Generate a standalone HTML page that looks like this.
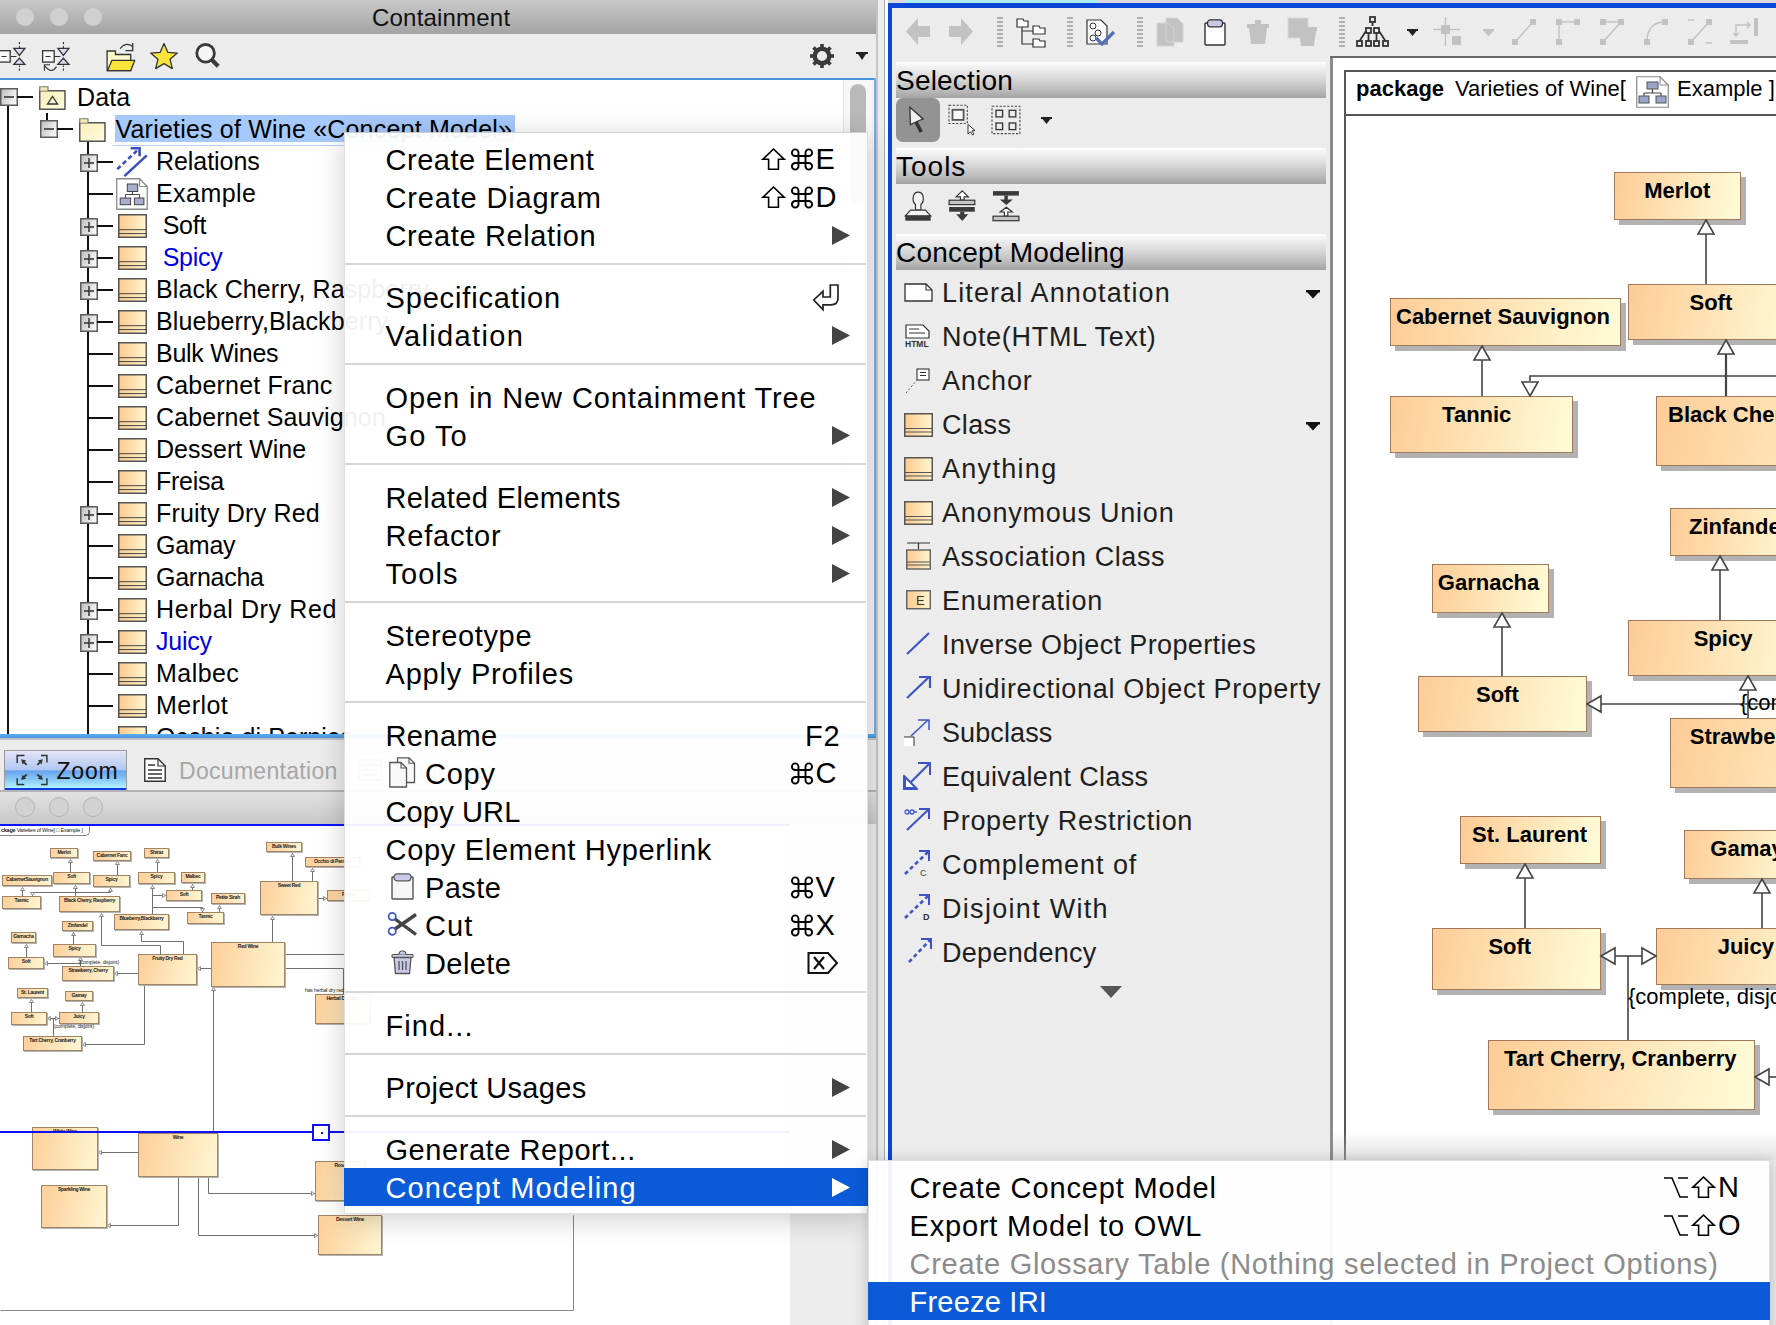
<!DOCTYPE html><html><head><meta charset="utf-8"><style>
html,body{margin:0;padding:0;}
body{width:1776px;height:1325px;overflow:hidden;position:relative;background:#ececec;font-family:"Liberation Sans", sans-serif;}
div{box-sizing:border-box;}
.t{position:absolute;white-space:pre;line-height:1;}
svg{position:absolute;overflow:visible;}
</style></head><body>
<div style="position:absolute;left:0px;top:0px;width:876px;height:34px;background:linear-gradient(#c9c9c9,#a3a3a3);"></div>
<div style="position:absolute;left:16px;top:8px;width:18px;height:18px;border-radius:50%;background:#d0d0d0;"></div>
<div style="position:absolute;left:50px;top:8px;width:18px;height:18px;border-radius:50%;background:#d0d0d0;"></div>
<div style="position:absolute;left:84px;top:8px;width:18px;height:18px;border-radius:50%;background:#d0d0d0;"></div>
<div class="t" style="left:372px;top:6px;font-size:24px;letter-spacing:0.2px;color:#111;">Containment</div>
<div style="position:absolute;left:0px;top:34px;width:876px;height:44px;background:#ececec;"></div>
<div style="position:absolute;left:0px;top:78px;width:876px;height:2px;background:#4a94dc;"></div>
<div style="position:absolute;left:0px;top:80px;width:874px;height:654px;background:#fff;"></div>
<div style="position:absolute;left:874px;top:78px;width:2px;height:660px;background:#6aaaf0;"></div>
<div style="position:absolute;left:876px;top:34px;width:2px;height:44px;background:#d4d4d4;"></div>
<div style="position:absolute;left:843px;top:80px;width:30px;height:654px;background:#f7f7f7;border-left:1px solid #e2e2e2;border-right:1px solid #ececec;"></div>
<div style="position:absolute;left:850px;top:84px;width:16px;height:120px;background:#b9b9b9;border-radius:8px;"></div>
<div style="position:absolute;left:0px;top:734px;width:876px;height:4px;background:linear-gradient(#5ab0f2,#4a92de);"></div>
<div style="position:absolute;left:0px;top:738px;width:876px;height:2px;background:#c4c4c4;"></div>
<div style="position:absolute;left:0px;top:740px;width:878px;height:50px;background:#ececec;"></div>
<div style="position:absolute;left:0px;top:790px;width:878px;height:2px;background:#b4b4b4;"></div>
<div style="position:absolute;left:0px;top:792px;width:878px;height:32px;background:linear-gradient(#e2e2e2,#c8c8c8);"></div>
<div style="position:absolute;left:15px;top:797px;width:20px;height:20px;border-radius:50%;background:#d2d2d2;border:1px solid #b4b4b4;"></div>
<div style="position:absolute;left:49px;top:797px;width:20px;height:20px;border-radius:50%;background:#d2d2d2;border:1px solid #b4b4b4;"></div>
<div style="position:absolute;left:83px;top:797px;width:20px;height:20px;border-radius:50%;background:#d2d2d2;border:1px solid #b4b4b4;"></div>
<div style="position:absolute;left:0px;top:824px;width:790px;height:2px;background:#0a14ff;"></div>
<div style="position:absolute;left:0px;top:826px;width:790px;height:499px;background:#fff;"></div>
<div style="position:absolute;left:876px;top:0px;width:2px;height:1325px;background:#c4c4c4;"></div>
<div style="position:absolute;left:878px;top:0px;width:6px;height:1325px;background:#ededed;"></div>
<div style="position:absolute;left:884px;top:0px;width:1px;height:1325px;background:#a8a8a8;"></div>
<div style="position:absolute;left:885px;top:0px;width:3px;height:1325px;background:#fff;"></div>
<div style="position:absolute;left:888px;top:0px;width:888px;height:4px;background:#dcdcdc;"></div>
<div style="position:absolute;left:905px;top:0px;width:193px;height:4px;background:#aef0fa;"></div>
<div style="position:absolute;left:888px;top:3px;width:888px;height:5px;background:#0a46d8;"></div>
<div style="position:absolute;left:888px;top:3px;width:4px;height:1322px;background:#0a46d8;"></div>
<div style="position:absolute;left:892px;top:8px;width:884px;height:48px;background:#ececec;"></div>
<div style="position:absolute;left:1330px;top:56px;width:446px;height:2px;background:#6a6a6a;"></div>
<div style="position:absolute;left:892px;top:58px;width:438px;height:1267px;background:#ececec;"></div>
<div style="position:absolute;left:1330px;top:58px;width:3px;height:1267px;background:#8c8c8c;"></div>
<div style="position:absolute;left:1333px;top:58px;width:443px;height:1102px;background:#fff;"></div>
<svg width="0" height="0" style="position:absolute"><defs><linearGradient id="expg" x1="0" y1="0.3" x2="1" y2="0.7"><stop offset="0" stop-color="#c2c2c2"/><stop offset="1" stop-color="#fbfbfb"/></linearGradient><linearGradient id="clsg" x1="0" y1="0" x2="1" y2="0"><stop offset="0" stop-color="#fcc98e"/><stop offset="1" stop-color="#fff6d0"/></linearGradient><linearGradient id="fldg" x1="0" y1="0" x2="1" y2="1"><stop offset="0" stop-color="#f8efb8"/><stop offset="1" stop-color="#fffbe0"/></linearGradient></defs></svg>
<div style="position:absolute;left:0;top:80px;width:874px;height:654px;overflow:hidden"><div style="position:absolute;left:0;top:-80px;width:1px;height:1px">
<div style="position:absolute;left:7px;top:105px;width:2px;height:629px;background:#111;"></div>
<div style="position:absolute;left:46px;top:113px;width:2px;height:9px;background:#111;"></div>
<div style="position:absolute;left:87px;top:142px;width:2px;height:592px;background:#111;"></div>
<svg style="left:0px;top:88px;" width="18" height="18" viewBox="0 0 18 18"><rect x="0.75" y="0.75" width="16.5" height="16.5" fill="url(#expg)" stroke="#5c5c5c" stroke-width="1.5"/><path d="M4,9 H14" stroke="#3a3a3a" stroke-width="1.6"/></svg>
<div style="position:absolute;left:17px;top:96px;width:16px;height:2px;background:#111;"></div>
<svg style="left:39px;top:86px;" width="27" height="24" viewBox="0 0 27 24"><path d="M0.75,4.75 H26 V23.25 H0.75 Z" fill="url(#fldg)" stroke="#555" stroke-width="1.5"/><path d="M0.75,4.75 V0.75 H9 V4.75" fill="#f4ecb8" stroke="#777" stroke-width="1.2"/><path d="M8.5,18 L13.5,10.5 L18.5,18 Z" fill="none" stroke="#333" stroke-width="1.3"/></svg>
<div class="t" style="left:77px;top:85px;font-size:25px;color:#000;letter-spacing:0.1px;">Data</div>
<div style="position:absolute;left:115px;top:115px;width:400px;height:27px;background:#a6c9fb;"></div>
<div style="position:absolute;left:113px;top:145px;width:403px;height:1px;background:#b4d2f8;"></div>
<svg style="left:40px;top:120px;" width="18" height="18" viewBox="0 0 18 18"><rect x="0.75" y="0.75" width="16.5" height="16.5" fill="url(#expg)" stroke="#5c5c5c" stroke-width="1.5"/><path d="M4,9 H14" stroke="#3a3a3a" stroke-width="1.6"/></svg>
<div style="position:absolute;left:57px;top:128px;width:16px;height:2px;background:#111;"></div>
<svg style="left:79px;top:118px;" width="27" height="24" viewBox="0 0 27 24"><path d="M0.75,4.75 H26 V23.25 H0.75 Z" fill="url(#fldg)" stroke="#555" stroke-width="1.5"/><path d="M0.75,4.75 V0.75 H9 V4.75" fill="#f4ecb8" stroke="#777" stroke-width="1.2"/></svg>
<div class="t" style="left:115.5px;top:117px;font-size:25px;color:#000;letter-spacing:0.2px;">Varieties of Wine «Concept Model»</div>
<svg style="left:80px;top:154px;" width="18" height="18" viewBox="0 0 18 18"><rect x="0.75" y="0.75" width="16.5" height="16.5" fill="url(#expg)" stroke="#5c5c5c" stroke-width="1.5"/><path d="M4,9 H14" stroke="#3a3a3a" stroke-width="1.6"/><path d="M9,4 V14" stroke="#3a3a3a" stroke-width="1.6"/></svg>
<div style="position:absolute;left:97px;top:161px;width:16px;height:2px;background:#111;"></div>
<svg style="left:116px;top:147px;" width="32" height="32" viewBox="0 0 32 32"><path d="M1.3,22.1 L22.5,2.2" stroke="#3c4fc0" stroke-width="2.6" stroke-dasharray="4.5,3"/><path d="M14.6,1.2 H23.6 V9.2" fill="none" stroke="#3c4fc0" stroke-width="2.6"/><path d="M8.4,29.1 L30.8,8.4" stroke="#3c4fc0" stroke-width="2.6"/></svg>
<div class="t" style="left:156px;top:149px;font-size:25px;color:#000;letter-spacing:-0.05px;">Relations</div>
<div style="position:absolute;left:88px;top:193px;width:25px;height:2px;background:#111;"></div>
<svg style="left:116px;top:178px;" width="32" height="32" viewBox="0 0 32 32"><path d="M0.75,0.75 H23.5 L31.25,8.5 V31.25 H0.75 Z" fill="#fff" stroke="#8a8a8a" stroke-width="1.3"/><path d="M23.5,0.75 V8.5 H31.25" fill="none" stroke="#8a8a8a" stroke-width="1"/><rect x="11.3" y="6" width="10.4" height="7.5" fill="#a8aecb" stroke="#444" stroke-width="1"/><path d="M16.5,13.5 V16.5 M9.5,16.5 H23.5 M9.5,16.5 V20 M23.5,16.5 V20" stroke="#444" stroke-width="1"/><rect x="4.2" y="20" width="10.4" height="6.7" fill="#a8aecb" stroke="#444" stroke-width="1"/><rect x="18.4" y="20" width="9.5" height="6.7" fill="#a8aecb" stroke="#444" stroke-width="1"/></svg>
<div class="t" style="left:156px;top:181px;font-size:25px;color:#000;letter-spacing:0.44999999999999996px;">Example</div>
<svg style="left:80px;top:218px;" width="18" height="18" viewBox="0 0 18 18"><rect x="0.75" y="0.75" width="16.5" height="16.5" fill="url(#expg)" stroke="#5c5c5c" stroke-width="1.5"/><path d="M4,9 H14" stroke="#3a3a3a" stroke-width="1.6"/><path d="M9,4 V14" stroke="#3a3a3a" stroke-width="1.6"/></svg>
<div style="position:absolute;left:97px;top:225px;width:16px;height:2px;background:#111;"></div>
<svg style="left:118px;top:214px;" width="29" height="24" viewBox="0 0 29 24"><rect x="0.75" y="0.75" width="27.5" height="22.5" fill="url(#clsg)" stroke="#555" stroke-width="1.5"/><path d="M1,15.7 H28 M1,19.6 H28" stroke="#444" stroke-width="1"/></svg>
<div class="t" style="left:156px;top:213px;font-size:25px;color:#000;letter-spacing:-0.24999999999999997px;"> Soft</div>
<svg style="left:80px;top:250px;" width="18" height="18" viewBox="0 0 18 18"><rect x="0.75" y="0.75" width="16.5" height="16.5" fill="url(#expg)" stroke="#5c5c5c" stroke-width="1.5"/><path d="M4,9 H14" stroke="#3a3a3a" stroke-width="1.6"/><path d="M9,4 V14" stroke="#3a3a3a" stroke-width="1.6"/></svg>
<div style="position:absolute;left:97px;top:257px;width:16px;height:2px;background:#111;"></div>
<svg style="left:118px;top:246px;" width="29" height="24" viewBox="0 0 29 24"><rect x="0.75" y="0.75" width="27.5" height="22.5" fill="url(#clsg)" stroke="#555" stroke-width="1.5"/><path d="M1,15.7 H28 M1,19.6 H28" stroke="#444" stroke-width="1"/></svg>
<div class="t" style="left:156px;top:245px;font-size:25px;color:#000;letter-spacing:-0.24999999999999997px;color:#0000e6;"> Spicy</div>
<svg style="left:80px;top:282px;" width="18" height="18" viewBox="0 0 18 18"><rect x="0.75" y="0.75" width="16.5" height="16.5" fill="url(#expg)" stroke="#5c5c5c" stroke-width="1.5"/><path d="M4,9 H14" stroke="#3a3a3a" stroke-width="1.6"/><path d="M9,4 V14" stroke="#3a3a3a" stroke-width="1.6"/></svg>
<div style="position:absolute;left:97px;top:289px;width:16px;height:2px;background:#111;"></div>
<svg style="left:118px;top:278px;" width="29" height="24" viewBox="0 0 29 24"><rect x="0.75" y="0.75" width="27.5" height="22.5" fill="url(#clsg)" stroke="#555" stroke-width="1.5"/><path d="M1,15.7 H28 M1,19.6 H28" stroke="#444" stroke-width="1"/></svg>
<div class="t" style="left:156px;top:277px;font-size:25px;color:#000;letter-spacing:0.1px;">Black Cherry, Raspberry</div>
<svg style="left:80px;top:314px;" width="18" height="18" viewBox="0 0 18 18"><rect x="0.75" y="0.75" width="16.5" height="16.5" fill="url(#expg)" stroke="#5c5c5c" stroke-width="1.5"/><path d="M4,9 H14" stroke="#3a3a3a" stroke-width="1.6"/><path d="M9,4 V14" stroke="#3a3a3a" stroke-width="1.6"/></svg>
<div style="position:absolute;left:97px;top:321px;width:16px;height:2px;background:#111;"></div>
<svg style="left:118px;top:310px;" width="29" height="24" viewBox="0 0 29 24"><rect x="0.75" y="0.75" width="27.5" height="22.5" fill="url(#clsg)" stroke="#555" stroke-width="1.5"/><path d="M1,15.7 H28 M1,19.6 H28" stroke="#444" stroke-width="1"/></svg>
<div class="t" style="left:156px;top:309px;font-size:25px;color:#000;letter-spacing:0.1px;">Blueberry,Blackberry</div>
<div style="position:absolute;left:88px;top:353px;width:25px;height:2px;background:#111;"></div>
<svg style="left:118px;top:342px;" width="29" height="24" viewBox="0 0 29 24"><rect x="0.75" y="0.75" width="27.5" height="22.5" fill="url(#clsg)" stroke="#555" stroke-width="1.5"/><path d="M1,15.7 H28 M1,19.6 H28" stroke="#444" stroke-width="1"/></svg>
<div class="t" style="left:156px;top:341px;font-size:25px;color:#000;letter-spacing:-0.28px;">Bulk Wines</div>
<div style="position:absolute;left:88px;top:385px;width:25px;height:2px;background:#111;"></div>
<svg style="left:118px;top:374px;" width="29" height="24" viewBox="0 0 29 24"><rect x="0.75" y="0.75" width="27.5" height="22.5" fill="url(#clsg)" stroke="#555" stroke-width="1.5"/><path d="M1,15.7 H28 M1,19.6 H28" stroke="#444" stroke-width="1"/></svg>
<div class="t" style="left:156px;top:373px;font-size:25px;color:#000;letter-spacing:0.2px;">Cabernet Franc</div>
<div style="position:absolute;left:88px;top:417px;width:25px;height:2px;background:#111;"></div>
<svg style="left:118px;top:406px;" width="29" height="24" viewBox="0 0 29 24"><rect x="0.75" y="0.75" width="27.5" height="22.5" fill="url(#clsg)" stroke="#555" stroke-width="1.5"/><path d="M1,15.7 H28 M1,19.6 H28" stroke="#444" stroke-width="1"/></svg>
<div class="t" style="left:156px;top:405px;font-size:25px;color:#000;letter-spacing:0.1px;">Cabernet Sauvignon</div>
<div style="position:absolute;left:88px;top:449px;width:25px;height:2px;background:#111;"></div>
<svg style="left:118px;top:438px;" width="29" height="24" viewBox="0 0 29 24"><rect x="0.75" y="0.75" width="27.5" height="22.5" fill="url(#clsg)" stroke="#555" stroke-width="1.5"/><path d="M1,15.7 H28 M1,19.6 H28" stroke="#444" stroke-width="1"/></svg>
<div class="t" style="left:156px;top:437px;font-size:25px;color:#000;letter-spacing:0.01px;">Dessert Wine</div>
<div style="position:absolute;left:88px;top:481px;width:25px;height:2px;background:#111;"></div>
<svg style="left:118px;top:470px;" width="29" height="24" viewBox="0 0 29 24"><rect x="0.75" y="0.75" width="27.5" height="22.5" fill="url(#clsg)" stroke="#555" stroke-width="1.5"/><path d="M1,15.7 H28 M1,19.6 H28" stroke="#444" stroke-width="1"/></svg>
<div class="t" style="left:156px;top:469px;font-size:25px;color:#000;letter-spacing:-0.24999999999999997px;">Freisa</div>
<svg style="left:80px;top:506px;" width="18" height="18" viewBox="0 0 18 18"><rect x="0.75" y="0.75" width="16.5" height="16.5" fill="url(#expg)" stroke="#5c5c5c" stroke-width="1.5"/><path d="M4,9 H14" stroke="#3a3a3a" stroke-width="1.6"/><path d="M9,4 V14" stroke="#3a3a3a" stroke-width="1.6"/></svg>
<div style="position:absolute;left:97px;top:513px;width:16px;height:2px;background:#111;"></div>
<svg style="left:118px;top:502px;" width="29" height="24" viewBox="0 0 29 24"><rect x="0.75" y="0.75" width="27.5" height="22.5" fill="url(#clsg)" stroke="#555" stroke-width="1.5"/><path d="M1,15.7 H28 M1,19.6 H28" stroke="#444" stroke-width="1"/></svg>
<div class="t" style="left:156px;top:501px;font-size:25px;color:#000;letter-spacing:0.2px;">Fruity Dry Red</div>
<div style="position:absolute;left:88px;top:545px;width:25px;height:2px;background:#111;"></div>
<svg style="left:118px;top:534px;" width="29" height="24" viewBox="0 0 29 24"><rect x="0.75" y="0.75" width="27.5" height="22.5" fill="url(#clsg)" stroke="#555" stroke-width="1.5"/><path d="M1,15.7 H28 M1,19.6 H28" stroke="#444" stroke-width="1"/></svg>
<div class="t" style="left:156px;top:533px;font-size:25px;color:#000;letter-spacing:-0.24999999999999997px;">Gamay</div>
<div style="position:absolute;left:88px;top:577px;width:25px;height:2px;background:#111;"></div>
<svg style="left:118px;top:566px;" width="29" height="24" viewBox="0 0 29 24"><rect x="0.75" y="0.75" width="27.5" height="22.5" fill="url(#clsg)" stroke="#555" stroke-width="1.5"/><path d="M1,15.7 H28 M1,19.6 H28" stroke="#444" stroke-width="1"/></svg>
<div class="t" style="left:156px;top:565px;font-size:25px;color:#000;letter-spacing:-0.26px;">Garnacha</div>
<svg style="left:80px;top:602px;" width="18" height="18" viewBox="0 0 18 18"><rect x="0.75" y="0.75" width="16.5" height="16.5" fill="url(#expg)" stroke="#5c5c5c" stroke-width="1.5"/><path d="M4,9 H14" stroke="#3a3a3a" stroke-width="1.6"/><path d="M9,4 V14" stroke="#3a3a3a" stroke-width="1.6"/></svg>
<div style="position:absolute;left:97px;top:609px;width:16px;height:2px;background:#111;"></div>
<svg style="left:118px;top:598px;" width="29" height="24" viewBox="0 0 29 24"><rect x="0.75" y="0.75" width="27.5" height="22.5" fill="url(#clsg)" stroke="#555" stroke-width="1.5"/><path d="M1,15.7 H28 M1,19.6 H28" stroke="#444" stroke-width="1"/></svg>
<div class="t" style="left:156px;top:597px;font-size:25px;color:#000;letter-spacing:0.62px;">Herbal Dry Red</div>
<svg style="left:80px;top:634px;" width="18" height="18" viewBox="0 0 18 18"><rect x="0.75" y="0.75" width="16.5" height="16.5" fill="url(#expg)" stroke="#5c5c5c" stroke-width="1.5"/><path d="M4,9 H14" stroke="#3a3a3a" stroke-width="1.6"/><path d="M9,4 V14" stroke="#3a3a3a" stroke-width="1.6"/></svg>
<div style="position:absolute;left:97px;top:641px;width:16px;height:2px;background:#111;"></div>
<svg style="left:118px;top:630px;" width="29" height="24" viewBox="0 0 29 24"><rect x="0.75" y="0.75" width="27.5" height="22.5" fill="url(#clsg)" stroke="#555" stroke-width="1.5"/><path d="M1,15.7 H28 M1,19.6 H28" stroke="#444" stroke-width="1"/></svg>
<div class="t" style="left:156px;top:629px;font-size:25px;color:#000;letter-spacing:-0.24999999999999997px;color:#0000e6;">Juicy</div>
<div style="position:absolute;left:88px;top:673px;width:25px;height:2px;background:#111;"></div>
<svg style="left:118px;top:662px;" width="29" height="24" viewBox="0 0 29 24"><rect x="0.75" y="0.75" width="27.5" height="22.5" fill="url(#clsg)" stroke="#555" stroke-width="1.5"/><path d="M1,15.7 H28 M1,19.6 H28" stroke="#444" stroke-width="1"/></svg>
<div class="t" style="left:156px;top:661px;font-size:25px;color:#000;letter-spacing:0.44999999999999996px;">Malbec</div>
<div style="position:absolute;left:88px;top:705px;width:25px;height:2px;background:#111;"></div>
<svg style="left:118px;top:694px;" width="29" height="24" viewBox="0 0 29 24"><rect x="0.75" y="0.75" width="27.5" height="22.5" fill="url(#clsg)" stroke="#555" stroke-width="1.5"/><path d="M1,15.7 H28 M1,19.6 H28" stroke="#444" stroke-width="1"/></svg>
<div class="t" style="left:156px;top:693px;font-size:25px;color:#000;letter-spacing:0.44999999999999996px;">Merlot</div>
<div style="position:absolute;left:88px;top:737px;width:25px;height:2px;background:#111;"></div>
<svg style="left:118px;top:726px;" width="29" height="24" viewBox="0 0 29 24"><rect x="0.75" y="0.75" width="27.5" height="22.5" fill="url(#clsg)" stroke="#555" stroke-width="1.5"/><path d="M1,15.7 H28 M1,19.6 H28" stroke="#444" stroke-width="1"/></svg>
<div class="t" style="left:156px;top:725px;font-size:25px;color:#000;letter-spacing:0.1px;">Occhio di Pernice</div>
</div></div>
<svg style="left:-1.9px;top:42px;" width="30" height="30" viewBox="0 0 30 30"><rect x="0.6" y="8.7" width="11.6" height="11.4" fill="#f8f8f8" stroke="#333" stroke-width="1.3"/><path d="M3.5,14.5 H8.5 M12.7,14.5 H18.4" stroke="#333" stroke-width="1.1"/><path d="M15.9,6.4 H26.9 L21.4,13.4 Z M21.4,16.3 L15.9,22.4 H26.9 Z" fill="#d8dcf4" stroke="#333" stroke-width="1.3" stroke-linejoin="miter"/><path d="M21.4,0 V2.3 M21.4,4.1 V5.9 M21.4,23.5 V25 M21.4,26.4 V28.7" stroke="#333" stroke-width="1.1"/></svg>
<svg style="left:42px;top:42px;" width="30" height="30" viewBox="0 0 30 30"><rect x="0.6" y="8.7" width="11.6" height="11.4" fill="#f8f8f8" stroke="#333" stroke-width="1.3"/><path d="M3.5,14.5 H8.5 M12.7,14.5 H18.4" stroke="#333" stroke-width="1.1"/><path d="M15.9,6.4 H26.9 L21.4,13.4 Z M21.4,16.3 L15.9,22.4 H26.9 Z" fill="#d8dcf4" stroke="#333" stroke-width="1.3" stroke-linejoin="miter"/><path d="M21.4,0 V2.3 M21.4,4.1 V5.9 M21.4,23.5 V25 M21.4,26.4 V28.7" stroke="#333" stroke-width="1.1"/><path d="M2.4,28.7 V22.8 H8" fill="none" stroke="#333" stroke-width="1.1"/><path d="M3,24.2 Q9.6,32.5 14.5,24.6" fill="none" stroke="#333" stroke-width="1.1"/></svg>
<svg style="left:106px;top:42px;" width="30" height="30" viewBox="0 0 30 30"><path d="M1.1,9 H9.4 V12.5 H24.7 V28.7 H1.1 Z" fill="#fdf8c8" stroke="#333" stroke-width="1.3"/><path d="M5.8,18.4 H28.7 L24.7,28.7 H1.5 Z" fill="#f8e43a" stroke="#333" stroke-width="1.3" stroke-linejoin="round"/><path d="M14.1,6.6 Q20,-0.5 26.5,4.5" fill="none" stroke="#333" stroke-width="1.2"/><path d="M26.7,1 V8.6 H19.5" fill="none" stroke="#333" stroke-width="1.3"/></svg>
<svg style="left:149px;top:42px;" width="30" height="28" viewBox="0 0 30 28"><path d="M15,1.5 L18.8,10.3 L28.3,11.1 L21.1,17.3 L23.3,26.6 L15,21.6 L6.7,26.6 L8.9,17.3 L1.7,11.1 L11.2,10.3 Z" fill="#f8e43a" stroke="#333" stroke-width="1.3" stroke-linejoin="round"/></svg>
<svg style="left:194px;top:42px;" width="28" height="28" viewBox="0 0 28 28"><circle cx="11.6" cy="11.3" r="8.8" fill="#f6f6f6" stroke="#3a3a3a" stroke-width="2.8"/><path d="M17.8,17.8 L24.2,24.2" stroke="#3a3a3a" stroke-width="4.2"/></svg>
<svg style="left:809px;top:43px;" width="26" height="26" viewBox="0 0 26 26"><circle cx="13" cy="13" r="7.3" fill="none" stroke="#3a3a3a" stroke-width="4.4"/><rect x="11.2" y="1" width="3.6" height="4" fill="#3a3a3a" transform="rotate(0 13 13)"/><rect x="11.2" y="1" width="3.6" height="4" fill="#3a3a3a" transform="rotate(45 13 13)"/><rect x="11.2" y="1" width="3.6" height="4" fill="#3a3a3a" transform="rotate(90 13 13)"/><rect x="11.2" y="1" width="3.6" height="4" fill="#3a3a3a" transform="rotate(135 13 13)"/><rect x="11.2" y="1" width="3.6" height="4" fill="#3a3a3a" transform="rotate(180 13 13)"/><rect x="11.2" y="1" width="3.6" height="4" fill="#3a3a3a" transform="rotate(225 13 13)"/><rect x="11.2" y="1" width="3.6" height="4" fill="#3a3a3a" transform="rotate(270 13 13)"/><rect x="11.2" y="1" width="3.6" height="4" fill="#3a3a3a" transform="rotate(315 13 13)"/></svg>
<svg style="left:856px;top:52px;" width="12" height="8" viewBox="0 0 12 8"><path d="M0,0 H12 V2 H10 L6,8 L2,2 H0 Z" fill="#222"/></svg>
<div style="position:absolute;left:4px;top:750px;width:123px;height:40px;background:linear-gradient(#e4e4f6 0%,#b0c8f2 48%,#68a4f0 51%,#86c6f6 72%,#b4f6ff 96%);border:1px solid #9a9a9a;border-bottom:none;"></div>
<div style="position:absolute;left:5px;top:788px;width:121px;height:2px;background:#0a3ae8;"></div>
<svg style="left:15px;top:754px;" width="34" height="32" viewBox="0 0 34 32"><path d="M2.2,9 V1.6 H9.5 M26,1.6 H31.9 V8.6 M2.2,24.3 V30.5 H9.2 M31.9,24.3 V30.5 H26" fill="none" stroke="#333" stroke-width="1.5"/><path d="M8.8,8.2 L11.7,10.9 M25.2,8.2 L22.3,10.9 M8.8,23.2 L11.7,20.5 M25.2,23.2 L22.3,20.5" stroke="#333" stroke-width="1.8"/><path d="M6.2,5.3 L11.2,6.6 L7.5,10.6 Z M27.8,5.3 L22.8,6.6 L26.5,10.6 Z M6.2,26.1 L11.2,24.8 L7.5,20.8 Z M27.8,26.1 L22.8,24.8 L26.5,20.8 Z" fill="#333"/></svg>
<div class="t" style="left:56.5px;top:760px;font-size:23px;letter-spacing:0.8px;color:#111;">Zoom</div>
<svg style="left:144px;top:758px;" width="22" height="24" viewBox="0 0 22 24"><path d="M0.75,0.75 H14 L21.25,8 V23.25 H0.75 Z" fill="#fff" stroke="#333" stroke-width="1.4"/><path d="M14,0.75 V8 H21.25" fill="none" stroke="#333" stroke-width="1.2"/><path d="M4,7 H11 M4,12 H18 M4,16 H18 M4,20 H18" stroke="#333" stroke-width="1.3"/></svg>
<div class="t" style="left:179px;top:760px;font-size:23px;letter-spacing:0.3px;color:#a6a6a6;">Documentation</div>
<div style="position:absolute;left:351px;top:753px;width:172px;height:34px;border:1px solid #c8c8c8;border-bottom:none;"></div>
<svg style="left:358px;top:759px;" width="24" height="22" viewBox="0 0 24 22"><rect x="1" y="1" width="22" height="20" fill="#fff" stroke="#777" stroke-width="1.2"/><path d="M4,6 H20 M4,11 H20 M4,16 H20" stroke="#777" stroke-width="1.6"/></svg>
<div class="t" style="left:388px;top:760px;font-size:23px;letter-spacing:0.3px;color:#a6a6a6;">Properties</div>
<div style="position:absolute;left:0;top:826px;width:790px;height:499px;overflow:hidden"><div style="position:absolute;left:0;top:-826px;width:1px;height:1px">
<div style="position:absolute;left:-20px;top:826px;width:110px;height:10px;border:1px solid #888;border-top:none;border-radius:0 0 5px 0;background:#fff;"><div class="t" style="left:20px;top:2px;font-size:5.5px;letter-spacing:-0.25px;color:#222"><b>ckage</b> Varieties of Wine[ &#9633; Example ]</div></div>
<svg style="left:0;top:0" width="1776" height="1325"><path d="M70.5,859.5 L70.5,872.5" fill="none" stroke="#707070" stroke-width="1"/></svg>
<svg style="left:0;top:0" width="1776" height="1325"><path d="M117.5,861.5 L117.5,875.5" fill="none" stroke="#707070" stroke-width="1"/></svg>
<svg style="left:0;top:0" width="1776" height="1325"><path d="M157.5,859.5 L157.5,872.5" fill="none" stroke="#707070" stroke-width="1"/></svg>
<svg style="left:0;top:0" width="1776" height="1325"><path d="M22.5,887.5 L22.5,896.5" fill="none" stroke="#707070" stroke-width="1"/></svg>
<svg style="left:0;top:0" width="1776" height="1325"><path d="M75.5,885.5 L75.5,896.5" fill="none" stroke="#707070" stroke-width="1"/></svg>
<svg style="left:0;top:0" width="1776" height="1325"><path d="M32.5,896.5 L32.5,892.5 L110.5,892.5 L110.5,888.5" fill="none" stroke="#707070" stroke-width="1"/></svg>
<svg style="left:0;top:0" width="1776" height="1325"><path d="M152.5,885.5 L152.5,914.5" fill="none" stroke="#707070" stroke-width="1"/></svg>
<svg style="left:0;top:0" width="1776" height="1325"><path d="M152.5,895.5 L166.5,895.5" fill="none" stroke="#707070" stroke-width="1"/></svg>
<svg style="left:0;top:0" width="1776" height="1325"><path d="M152.5,907.5 L202.5,907.5 L202.5,912.5" fill="none" stroke="#707070" stroke-width="1"/></svg>
<svg style="left:0;top:0" width="1776" height="1325"><path d="M219.5,905.5 L219.5,912.5" fill="none" stroke="#707070" stroke-width="1"/></svg>
<svg style="left:0;top:0" width="1776" height="1325"><path d="M192.5,884.5 L192.5,890.5" fill="none" stroke="#707070" stroke-width="1"/></svg>
<svg style="left:0;top:0" width="1776" height="1325"><path d="M292.5,853.5 L292.5,881.5" fill="none" stroke="#707070" stroke-width="1"/></svg>
<svg style="left:0;top:0" width="1776" height="1325"><path d="M312.5,868.5 L312.5,881.5" fill="none" stroke="#707070" stroke-width="1"/></svg>
<svg style="left:0;top:0" width="1776" height="1325"><path d="M318.5,898.5 L327.5,898.5" fill="none" stroke="#707070" stroke-width="1"/></svg>
<svg style="left:0;top:0" width="1776" height="1325"><path d="M272.5,916.5 L272.5,942.5" fill="none" stroke="#707070" stroke-width="1"/></svg>
<svg style="left:0;top:0" width="1776" height="1325"><path d="M73.5,932.5 L73.5,945.5" fill="none" stroke="#707070" stroke-width="1"/></svg>
<svg style="left:0;top:0" width="1776" height="1325"><path d="M26.5,944.5 L26.5,957.5" fill="none" stroke="#707070" stroke-width="1"/></svg>
<svg style="left:0;top:0" width="1776" height="1325"><path d="M45.5,963.5 L80.5,963.5" fill="none" stroke="#707070" stroke-width="1"/></svg>
<svg style="left:0;top:0" width="1776" height="1325"><path d="M80.5,957.5 L80.5,966.5" fill="none" stroke="#707070" stroke-width="1"/></svg>
<svg style="left:0;top:0" width="1776" height="1325"><path d="M101.5,913.5 L101.5,945.5 L160.5,945.5 L160.5,954.5" fill="none" stroke="#707070" stroke-width="1"/></svg>
<svg style="left:0;top:0" width="1776" height="1325"><path d="M141.5,931.5 L141.5,941.5 L183.5,941.5 L183.5,954.5" fill="none" stroke="#707070" stroke-width="1"/></svg>
<svg style="left:0;top:0" width="1776" height="1325"><path d="M114.5,973.5 L138.5,973.5" fill="none" stroke="#707070" stroke-width="1"/></svg>
<svg style="left:0;top:0" width="1776" height="1325"><path d="M197.5,968.5 L211.5,968.5" fill="none" stroke="#707070" stroke-width="1"/></svg>
<svg style="left:0;top:0" width="1776" height="1325"><path d="M285.5,954.5 L344.5,954.5" fill="none" stroke="#707070" stroke-width="1"/></svg>
<svg style="left:0;top:0" width="1776" height="1325"><path d="M285.5,968.5 L343.5,968.5" fill="none" stroke="#707070" stroke-width="1"/></svg>
<svg style="left:0;top:0" width="1776" height="1325"><path d="M31.5,999.5 L31.5,1012.5" fill="none" stroke="#707070" stroke-width="1"/></svg>
<svg style="left:0;top:0" width="1776" height="1325"><path d="M82.5,1002.5 L82.5,1012.5" fill="none" stroke="#707070" stroke-width="1"/></svg>
<svg style="left:0;top:0" width="1776" height="1325"><path d="M47.5,1018.5 L59.5,1018.5" fill="none" stroke="#707070" stroke-width="1"/></svg>
<svg style="left:0;top:0" width="1776" height="1325"><path d="M53.5,1018.5 L53.5,1036.5" fill="none" stroke="#707070" stroke-width="1"/></svg>
<svg style="left:0;top:0" width="1776" height="1325"><path d="M144.5,985.5 L144.5,1044.5 L82.5,1044.5" fill="none" stroke="#707070" stroke-width="1"/></svg>
<svg style="left:0;top:0" width="1776" height="1325"><path d="M213.5,987.5 L213.5,1133.5" fill="none" stroke="#707070" stroke-width="1"/></svg>
<svg style="left:0;top:0" width="1776" height="1325"><path d="M343.5,968.5 L343.5,994.5" fill="none" stroke="#707070" stroke-width="1"/></svg>
<svg style="left:0;top:0" width="1776" height="1325"><path d="M98.5,1152.5 L138.5,1152.5" fill="none" stroke="#707070" stroke-width="1"/></svg>
<svg style="left:0;top:0" width="1776" height="1325"><path d="M178.5,1177.5 L178.5,1225.5 L107.5,1225.5" fill="none" stroke="#707070" stroke-width="1"/></svg>
<svg style="left:0;top:0" width="1776" height="1325"><path d="M208.5,1177.5 L208.5,1193.5 L315.5,1193.5" fill="none" stroke="#707070" stroke-width="1"/></svg>
<svg style="left:0;top:0" width="1776" height="1325"><path d="M198.5,1177.5 L198.5,1235.5 L318.5,1235.5" fill="none" stroke="#707070" stroke-width="1"/></svg>
<svg style="left:0;top:0" width="1776" height="1325"><path d="M573.5,1215.5 L573.5,1310.5 L0.5,1310.5" fill="none" stroke="#888" stroke-width="1"/></svg>
<svg style="left:0;top:0" width="1776" height="1325"><path d="M70.5,859.5 L72.5,862.5 L68.5,862.5 Z" fill="#fff" stroke="#707070" stroke-width="0.8"/></svg>
<svg style="left:0;top:0" width="1776" height="1325"><path d="M117.5,861.5 L119.5,864.5 L115.5,864.5 Z" fill="#fff" stroke="#707070" stroke-width="0.8"/></svg>
<svg style="left:0;top:0" width="1776" height="1325"><path d="M157.5,859.5 L159.5,862.5 L155.5,862.5 Z" fill="#fff" stroke="#707070" stroke-width="0.8"/></svg>
<svg style="left:0;top:0" width="1776" height="1325"><path d="M22.5,887.5 L24.5,890.5 L20.5,890.5 Z" fill="#fff" stroke="#707070" stroke-width="0.8"/></svg>
<svg style="left:0;top:0" width="1776" height="1325"><path d="M75.5,885.5 L77.5,888.5 L73.5,888.5 Z" fill="#fff" stroke="#707070" stroke-width="0.8"/></svg>
<svg style="left:0;top:0" width="1776" height="1325"><path d="M110.5,888.5 L112.5,891.5 L108.5,891.5 Z" fill="#fff" stroke="#707070" stroke-width="0.8"/></svg>
<svg style="left:0;top:0" width="1776" height="1325"><path d="M152.5,885.5 L154.5,888.5 L150.5,888.5 Z" fill="#fff" stroke="#707070" stroke-width="0.8"/></svg>
<svg style="left:0;top:0" width="1776" height="1325"><path d="M219.5,905.5 L221.5,908.5 L217.5,908.5 Z" fill="#fff" stroke="#707070" stroke-width="0.8"/></svg>
<svg style="left:0;top:0" width="1776" height="1325"><path d="M192.5,884.5 L194.5,887.5 L190.5,887.5 Z" fill="#fff" stroke="#707070" stroke-width="0.8"/></svg>
<svg style="left:0;top:0" width="1776" height="1325"><path d="M292.5,853.5 L294.5,856.5 L290.5,856.5 Z" fill="#fff" stroke="#707070" stroke-width="0.8"/></svg>
<svg style="left:0;top:0" width="1776" height="1325"><path d="M312.5,868.5 L314.5,871.5 L310.5,871.5 Z" fill="#fff" stroke="#707070" stroke-width="0.8"/></svg>
<svg style="left:0;top:0" width="1776" height="1325"><path d="M272.5,916.5 L274.5,919.5 L270.5,919.5 Z" fill="#fff" stroke="#707070" stroke-width="0.8"/></svg>
<svg style="left:0;top:0" width="1776" height="1325"><path d="M73.5,932.5 L75.5,935.5 L71.5,935.5 Z" fill="#fff" stroke="#707070" stroke-width="0.8"/></svg>
<svg style="left:0;top:0" width="1776" height="1325"><path d="M26.5,944.5 L28.5,947.5 L24.5,947.5 Z" fill="#fff" stroke="#707070" stroke-width="0.8"/></svg>
<svg style="left:0;top:0" width="1776" height="1325"><path d="M80.5,957.5 L82.5,960.5 L78.5,960.5 Z" fill="#fff" stroke="#707070" stroke-width="0.8"/></svg>
<svg style="left:0;top:0" width="1776" height="1325"><path d="M101.5,913.5 L103.5,916.5 L99.5,916.5 Z" fill="#fff" stroke="#707070" stroke-width="0.8"/></svg>
<svg style="left:0;top:0" width="1776" height="1325"><path d="M141.5,931.5 L143.5,934.5 L139.5,934.5 Z" fill="#fff" stroke="#707070" stroke-width="0.8"/></svg>
<svg style="left:0;top:0" width="1776" height="1325"><path d="M31.5,999.5 L33.5,1002.5 L29.5,1002.5 Z" fill="#fff" stroke="#707070" stroke-width="0.8"/></svg>
<svg style="left:0;top:0" width="1776" height="1325"><path d="M82.5,1002.5 L84.5,1005.5 L80.5,1005.5 Z" fill="#fff" stroke="#707070" stroke-width="0.8"/></svg>
<svg style="left:0;top:0" width="1776" height="1325"><path d="M213.5,987.5 L215.5,990.5 L211.5,990.5 Z" fill="#fff" stroke="#707070" stroke-width="0.8"/></svg>
<svg style="left:0;top:0" width="1776" height="1325"><path d="M32.5,895.5 L34.5,892.5 L30.5,892.5 Z" fill="#fff" stroke="#707070" stroke-width="0.8"/></svg>
<svg style="left:0;top:0" width="1776" height="1325"><path d="M202.5,911.5 L204.5,908.5 L200.5,908.5 Z" fill="#fff" stroke="#707070" stroke-width="0.8"/></svg>
<svg style="left:0;top:0" width="1776" height="1325"><path d="M165.5,895.5 L162.5,893.5 L162.5,897.5 Z" fill="#fff" stroke="#707070" stroke-width="0.8"/></svg>
<svg style="left:0;top:0" width="1776" height="1325"><path d="M326.5,898.5 L323.5,896.5 L323.5,900.5 Z" fill="#fff" stroke="#707070" stroke-width="0.8"/></svg>
<svg style="left:0;top:0" width="1776" height="1325"><path d="M44.5,963.5 L47.5,961.5 L47.5,965.5 Z" fill="#fff" stroke="#707070" stroke-width="0.8"/></svg>
<svg style="left:0;top:0" width="1776" height="1325"><path d="M114.5,973.5 L117.5,971.5 L117.5,975.5 Z" fill="#fff" stroke="#707070" stroke-width="0.8"/></svg>
<svg style="left:0;top:0" width="1776" height="1325"><path d="M197.5,968.5 L200.5,966.5 L200.5,970.5 Z" fill="#fff" stroke="#707070" stroke-width="0.8"/></svg>
<svg style="left:0;top:0" width="1776" height="1325"><path d="M82.5,1044.5 L85.5,1042.5 L85.5,1046.5 Z" fill="#fff" stroke="#707070" stroke-width="0.8"/></svg>
<svg style="left:0;top:0" width="1776" height="1325"><path d="M47.5,1018.5 L50.5,1016.5 L50.5,1020.5 Z" fill="#fff" stroke="#707070" stroke-width="0.8"/></svg>
<svg style="left:0;top:0" width="1776" height="1325"><path d="M58.5,1018.5 L55.5,1016.5 L55.5,1020.5 Z" fill="#fff" stroke="#707070" stroke-width="0.8"/></svg>
<svg style="left:0;top:0" width="1776" height="1325"><path d="M98.5,1152.5 L101.5,1150.5 L101.5,1154.5 Z" fill="#fff" stroke="#707070" stroke-width="0.8"/></svg>
<svg style="left:0;top:0" width="1776" height="1325"><path d="M107.5,1225.5 L110.5,1223.5 L110.5,1227.5 Z" fill="#fff" stroke="#707070" stroke-width="0.8"/></svg>
<svg style="left:0;top:0" width="1776" height="1325"><path d="M314.5,1193.5 L311.5,1191.5 L311.5,1195.5 Z" fill="#fff" stroke="#707070" stroke-width="0.8"/></svg>
<svg style="left:0;top:0" width="1776" height="1325"><path d="M317.5,1235.5 L314.5,1233.5 L314.5,1237.5 Z" fill="#fff" stroke="#707070" stroke-width="0.8"/></svg>
<div style="position:absolute;left:51px;top:849px;width:28px;height:10px;background:#b4b4b4;"></div>
<div style="position:absolute;left:50px;top:848px;width:28px;height:10px;background:linear-gradient(100deg,#fccf9a,#fff6d2);border:1px solid #a08468;"><div class="t" style="left:0;right:0;top:1px;text-align:center;font-size:5px;font-weight:bold;color:#222;letter-spacing:-0.3px;overflow:hidden">Merlot</div></div>
<div style="position:absolute;left:94px;top:852px;width:38px;height:10px;background:#b4b4b4;"></div>
<div style="position:absolute;left:93px;top:851px;width:38px;height:10px;background:linear-gradient(100deg,#fccf9a,#fff6d2);border:1px solid #a08468;"><div class="t" style="left:0;right:0;top:1px;text-align:center;font-size:5px;font-weight:bold;color:#222;letter-spacing:-0.3px;overflow:hidden">Cabernet Fanc</div></div>
<div style="position:absolute;left:145px;top:849px;width:25px;height:10px;background:#b4b4b4;"></div>
<div style="position:absolute;left:144px;top:848px;width:25px;height:10px;background:linear-gradient(100deg,#fccf9a,#fff6d2);border:1px solid #a08468;"><div class="t" style="left:0;right:0;top:1px;text-align:center;font-size:5px;font-weight:bold;color:#222;letter-spacing:-0.3px;overflow:hidden">Shiraz</div></div>
<div style="position:absolute;left:267px;top:843px;width:36px;height:10px;background:#b4b4b4;"></div>
<div style="position:absolute;left:266px;top:842px;width:36px;height:10px;background:linear-gradient(100deg,#fccf9a,#fff6d2);border:1px solid #a08468;"><div class="t" style="left:0;right:0;top:1px;text-align:center;font-size:5px;font-weight:bold;color:#222;letter-spacing:-0.3px;overflow:hidden">Bulk Wines</div></div>
<div style="position:absolute;left:306px;top:858px;width:55px;height:10px;background:#b4b4b4;"></div>
<div style="position:absolute;left:305px;top:857px;width:55px;height:10px;background:linear-gradient(100deg,#fccf9a,#fff6d2);border:1px solid #a08468;"><div class="t" style="left:0;right:0;top:1px;text-align:center;font-size:5px;font-weight:bold;color:#222;letter-spacing:-0.3px;overflow:hidden">Occhio di Pernice</div></div>
<div style="position:absolute;left:3px;top:876px;width:50px;height:11px;background:#b4b4b4;"></div>
<div style="position:absolute;left:2px;top:875px;width:50px;height:11px;background:linear-gradient(100deg,#fccf9a,#fff6d2);border:1px solid #a08468;"><div class="t" style="left:0;right:0;top:1px;text-align:center;font-size:5px;font-weight:bold;color:#222;letter-spacing:-0.3px;overflow:hidden">CabernetSauvignon</div></div>
<div style="position:absolute;left:54px;top:873px;width:37px;height:12px;background:#b4b4b4;"></div>
<div style="position:absolute;left:53px;top:872px;width:37px;height:12px;background:linear-gradient(100deg,#fccf9a,#fff6d2);border:1px solid #a08468;"><div class="t" style="left:0;right:0;top:1px;text-align:center;font-size:5px;font-weight:bold;color:#222;letter-spacing:-0.3px;overflow:hidden">Soft</div></div>
<div style="position:absolute;left:94px;top:876px;width:37px;height:12px;background:#b4b4b4;"></div>
<div style="position:absolute;left:93px;top:875px;width:37px;height:12px;background:linear-gradient(100deg,#fccf9a,#fff6d2);border:1px solid #a08468;"><div class="t" style="left:0;right:0;top:1px;text-align:center;font-size:5px;font-weight:bold;color:#222;letter-spacing:-0.3px;overflow:hidden">Spicy</div></div>
<div style="position:absolute;left:139px;top:873px;width:37px;height:12px;background:#b4b4b4;"></div>
<div style="position:absolute;left:138px;top:872px;width:37px;height:12px;background:linear-gradient(100deg,#fccf9a,#fff6d2);border:1px solid #a08468;"><div class="t" style="left:0;right:0;top:1px;text-align:center;font-size:5px;font-weight:bold;color:#222;letter-spacing:-0.3px;overflow:hidden">Spicy</div></div>
<div style="position:absolute;left:182px;top:873px;width:24px;height:11px;background:#b4b4b4;"></div>
<div style="position:absolute;left:181px;top:872px;width:24px;height:11px;background:linear-gradient(100deg,#fccf9a,#fff6d2);border:1px solid #a08468;"><div class="t" style="left:0;right:0;top:1px;text-align:center;font-size:5px;font-weight:bold;color:#222;letter-spacing:-0.3px;overflow:hidden">Malbec</div></div>
<div style="position:absolute;left:167px;top:891px;width:36px;height:11px;background:#b4b4b4;"></div>
<div style="position:absolute;left:166px;top:890px;width:36px;height:11px;background:linear-gradient(100deg,#fccf9a,#fff6d2);border:1px solid #a08468;"><div class="t" style="left:0;right:0;top:1px;text-align:center;font-size:5px;font-weight:bold;color:#222;letter-spacing:-0.3px;overflow:hidden">Soft</div></div>
<div style="position:absolute;left:212px;top:894px;width:34px;height:11px;background:#b4b4b4;"></div>
<div style="position:absolute;left:211px;top:893px;width:34px;height:11px;background:linear-gradient(100deg,#fccf9a,#fff6d2);border:1px solid #a08468;"><div class="t" style="left:0;right:0;top:1px;text-align:center;font-size:5px;font-weight:bold;color:#222;letter-spacing:-0.3px;overflow:hidden">Petite Sirah</div></div>
<div style="position:absolute;left:261px;top:882px;width:58px;height:34px;background:#b4b4b4;"></div>
<div style="position:absolute;left:260px;top:881px;width:58px;height:34px;background:linear-gradient(100deg,#fccf9a,#fff6d2);border:1px solid #a08468;"><div class="t" style="left:0;right:0;top:1px;text-align:center;font-size:5px;font-weight:bold;color:#222;letter-spacing:-0.3px;overflow:hidden">Sweet Red</div></div>
<div style="position:absolute;left:328px;top:891px;width:43px;height:11px;background:#b4b4b4;"></div>
<div style="position:absolute;left:327px;top:890px;width:43px;height:11px;background:linear-gradient(100deg,#fccf9a,#fff6d2);border:1px solid #a08468;"><div class="t" style="left:0;right:0;top:1px;text-align:center;font-size:5px;font-weight:bold;color:#222;letter-spacing:-0.3px;overflow:hidden">Freisa</div></div>
<div style="position:absolute;left:3px;top:897px;width:39px;height:13px;background:#b4b4b4;"></div>
<div style="position:absolute;left:2px;top:896px;width:39px;height:13px;background:linear-gradient(100deg,#fccf9a,#fff6d2);border:1px solid #a08468;"><div class="t" style="left:0;right:0;top:1px;text-align:center;font-size:5px;font-weight:bold;color:#222;letter-spacing:-0.3px;overflow:hidden">Tannic</div></div>
<div style="position:absolute;left:60px;top:897px;width:61px;height:16px;background:#b4b4b4;"></div>
<div style="position:absolute;left:59px;top:896px;width:61px;height:16px;background:linear-gradient(100deg,#fccf9a,#fff6d2);border:1px solid #a08468;"><div class="t" style="left:0;right:0;top:1px;text-align:center;font-size:5px;font-weight:bold;color:#222;letter-spacing:-0.3px;overflow:hidden">Black Cherry, Raspberry</div></div>
<div style="position:absolute;left:115px;top:915px;width:55px;height:16px;background:#b4b4b4;"></div>
<div style="position:absolute;left:114px;top:914px;width:55px;height:16px;background:linear-gradient(100deg,#fccf9a,#fff6d2);border:1px solid #a08468;"><div class="t" style="left:0;right:0;top:1px;text-align:center;font-size:5px;font-weight:bold;color:#222;letter-spacing:-0.3px;overflow:hidden">Blueberry,Blackberry</div></div>
<div style="position:absolute;left:188px;top:913px;width:37px;height:12px;background:#b4b4b4;"></div>
<div style="position:absolute;left:187px;top:912px;width:37px;height:12px;background:linear-gradient(100deg,#fccf9a,#fff6d2);border:1px solid #a08468;"><div class="t" style="left:0;right:0;top:1px;text-align:center;font-size:5px;font-weight:bold;color:#222;letter-spacing:-0.3px;overflow:hidden">Tannic</div></div>
<div style="position:absolute;left:63px;top:922px;width:31px;height:10px;background:#b4b4b4;"></div>
<div style="position:absolute;left:62px;top:921px;width:31px;height:10px;background:linear-gradient(100deg,#fccf9a,#fff6d2);border:1px solid #a08468;"><div class="t" style="left:0;right:0;top:1px;text-align:center;font-size:5px;font-weight:bold;color:#222;letter-spacing:-0.3px;overflow:hidden">Zinfandel</div></div>
<div style="position:absolute;left:12px;top:933px;width:25px;height:11px;background:#b4b4b4;"></div>
<div style="position:absolute;left:11px;top:932px;width:25px;height:11px;background:linear-gradient(100deg,#fccf9a,#fff6d2);border:1px solid #a08468;"><div class="t" style="left:0;right:0;top:1px;text-align:center;font-size:5px;font-weight:bold;color:#222;letter-spacing:-0.3px;overflow:hidden">Garnacha</div></div>
<div style="position:absolute;left:54px;top:945px;width:43px;height:13px;background:#b4b4b4;"></div>
<div style="position:absolute;left:53px;top:944px;width:43px;height:13px;background:linear-gradient(100deg,#fccf9a,#fff6d2);border:1px solid #a08468;"><div class="t" style="left:0;right:0;top:1px;text-align:center;font-size:5px;font-weight:bold;color:#222;letter-spacing:-0.3px;overflow:hidden">Spicy</div></div>
<div style="position:absolute;left:139px;top:955px;width:59px;height:31px;background:#b4b4b4;"></div>
<div style="position:absolute;left:138px;top:954px;width:59px;height:31px;background:linear-gradient(100deg,#fccf9a,#fff6d2);border:1px solid #a08468;"><div class="t" style="left:0;right:0;top:1px;text-align:center;font-size:5px;font-weight:bold;color:#222;letter-spacing:-0.3px;overflow:hidden">Fruity Dry Red</div></div>
<div style="position:absolute;left:212px;top:943px;width:74px;height:45px;background:#b4b4b4;"></div>
<div style="position:absolute;left:211px;top:942px;width:74px;height:45px;background:linear-gradient(100deg,#fccf9a,#fff6d2);border:1px solid #a08468;"><div class="t" style="left:0;right:0;top:1px;text-align:center;font-size:5px;font-weight:bold;color:#222;letter-spacing:-0.3px;overflow:hidden">Red Wine</div></div>
<div style="position:absolute;left:9px;top:958px;width:36px;height:12px;background:#b4b4b4;"></div>
<div style="position:absolute;left:8px;top:957px;width:36px;height:12px;background:linear-gradient(100deg,#fccf9a,#fff6d2);border:1px solid #a08468;"><div class="t" style="left:0;right:0;top:1px;text-align:center;font-size:5px;font-weight:bold;color:#222;letter-spacing:-0.3px;overflow:hidden">Soft</div></div>
<div style="position:absolute;left:63px;top:967px;width:52px;height:15px;background:#b4b4b4;"></div>
<div style="position:absolute;left:62px;top:966px;width:52px;height:15px;background:linear-gradient(100deg,#fccf9a,#fff6d2);border:1px solid #a08468;"><div class="t" style="left:0;right:0;top:1px;text-align:center;font-size:5px;font-weight:bold;color:#222;letter-spacing:-0.3px;overflow:hidden">Strawberry, Cherry</div></div>
<div style="position:absolute;left:316px;top:995px;width:55px;height:30px;background:#b4b4b4;"></div>
<div style="position:absolute;left:315px;top:994px;width:55px;height:30px;background:linear-gradient(100deg,#fccf9a,#fff6d2);border:1px solid #a08468;"><div class="t" style="left:0;right:0;top:1px;text-align:center;font-size:5px;font-weight:bold;color:#222;letter-spacing:-0.3px;overflow:hidden">Herbal Dry Red</div></div>
<div style="position:absolute;left:18px;top:989px;width:31px;height:10px;background:#b4b4b4;"></div>
<div style="position:absolute;left:17px;top:988px;width:31px;height:10px;background:linear-gradient(100deg,#fccf9a,#fff6d2);border:1px solid #a08468;"><div class="t" style="left:0;right:0;top:1px;text-align:center;font-size:5px;font-weight:bold;color:#222;letter-spacing:-0.3px;overflow:hidden">St. Laurent</div></div>
<div style="position:absolute;left:66px;top:992px;width:28px;height:10px;background:#b4b4b4;"></div>
<div style="position:absolute;left:65px;top:991px;width:28px;height:10px;background:linear-gradient(100deg,#fccf9a,#fff6d2);border:1px solid #a08468;"><div class="t" style="left:0;right:0;top:1px;text-align:center;font-size:5px;font-weight:bold;color:#222;letter-spacing:-0.3px;overflow:hidden">Gamay</div></div>
<div style="position:absolute;left:12px;top:1013px;width:36px;height:13px;background:#b4b4b4;"></div>
<div style="position:absolute;left:11px;top:1012px;width:36px;height:13px;background:linear-gradient(100deg,#fccf9a,#fff6d2);border:1px solid #a08468;"><div class="t" style="left:0;right:0;top:1px;text-align:center;font-size:5px;font-weight:bold;color:#222;letter-spacing:-0.3px;overflow:hidden">Soft</div></div>
<div style="position:absolute;left:60px;top:1013px;width:40px;height:12px;background:#b4b4b4;"></div>
<div style="position:absolute;left:59px;top:1012px;width:40px;height:12px;background:linear-gradient(100deg,#fccf9a,#fff6d2);border:1px solid #a08468;"><div class="t" style="left:0;right:0;top:1px;text-align:center;font-size:5px;font-weight:bold;color:#222;letter-spacing:-0.3px;overflow:hidden">Juicy</div></div>
<div style="position:absolute;left:24px;top:1037px;width:59px;height:15px;background:#b4b4b4;"></div>
<div style="position:absolute;left:23px;top:1036px;width:59px;height:15px;background:linear-gradient(100deg,#fccf9a,#fff6d2);border:1px solid #a08468;"><div class="t" style="left:0;right:0;top:1px;text-align:center;font-size:5px;font-weight:bold;color:#222;letter-spacing:-0.3px;overflow:hidden">Tart Cherry, Cranberry</div></div>
<div style="position:absolute;left:33px;top:1128px;width:66px;height:43px;background:#b4b4b4;"></div>
<div style="position:absolute;left:32px;top:1127px;width:66px;height:43px;background:linear-gradient(100deg,#fccf9a,#fff6d2);border:1px solid #a08468;"><div class="t" style="left:0;right:0;top:1px;text-align:center;font-size:5px;font-weight:bold;color:#222;letter-spacing:-0.3px;overflow:hidden">White Wine</div></div>
<div style="position:absolute;left:139px;top:1134px;width:80px;height:44px;background:#b4b4b4;"></div>
<div style="position:absolute;left:138px;top:1133px;width:80px;height:44px;background:linear-gradient(100deg,#fccf9a,#fff6d2);border:1px solid #a08468;"><div class="t" style="left:0;right:0;top:1px;text-align:center;font-size:5px;font-weight:bold;color:#222;letter-spacing:-0.3px;overflow:hidden">Wine</div></div>
<div style="position:absolute;left:316px;top:1162px;width:50px;height:40px;background:#b4b4b4;"></div>
<div style="position:absolute;left:315px;top:1161px;width:50px;height:40px;background:linear-gradient(100deg,#fccf9a,#fff6d2);border:1px solid #a08468;"><div class="t" style="left:0;right:0;top:1px;text-align:center;font-size:5px;font-weight:bold;color:#222;letter-spacing:-0.3px;overflow:hidden">Rose</div></div>
<div style="position:absolute;left:42px;top:1186px;width:66px;height:43px;background:#b4b4b4;"></div>
<div style="position:absolute;left:41px;top:1185px;width:66px;height:43px;background:linear-gradient(100deg,#fccf9a,#fff6d2);border:1px solid #a08468;"><div class="t" style="left:0;right:0;top:1px;text-align:center;font-size:5px;font-weight:bold;color:#222;letter-spacing:-0.3px;overflow:hidden">Sparkling Wine</div></div>
<div style="position:absolute;left:319px;top:1216px;width:64px;height:40px;background:#b4b4b4;"></div>
<div style="position:absolute;left:318px;top:1215px;width:64px;height:40px;background:linear-gradient(100deg,#fccf9a,#fff6d2);border:1px solid #a08468;"><div class="t" style="left:0;right:0;top:1px;text-align:center;font-size:5px;font-weight:bold;color:#222;letter-spacing:-0.3px;overflow:hidden">Dessert Wine</div></div>
<div class="t" style="left:79px;top:960px;font-size:5px;letter-spacing:-0.1px;color:#222">{complete, disjoint}</div>
<div class="t" style="left:54px;top:1024px;font-size:5px;letter-spacing:-0.1px;color:#222">{complete, disjoint}</div>
<div class="t" style="left:305px;top:988px;font-size:5px;letter-spacing:-0.1px;color:#222">has herbal dry red</div>
<div style="position:absolute;left:0px;top:1131px;width:790px;height:2px;background:#1010f0;"></div>
<div style="position:absolute;left:312px;top:1124px;width:18px;height:17px;border:2px solid #1010f0;background:#fff;"><div style="position:absolute;left:7px;top:6px;width:2px;height:2px;background:#1010f0"></div></div>
</div></div>
<svg style="left:905px;top:17px;" width="26" height="29" viewBox="0 0 26 29"><path d="M13,1 L1,14.5 L13,28 L13,20 L25,20 L25,9 L13,9 Z" fill="#c2c2c2"/></svg>
<svg style="left:948px;top:17px;" width="26" height="29" viewBox="0 0 26 29"><path d="M13,1 L25,14.5 L13,28 L13,20 L1,20 L1,9 L13,9 Z" fill="#c2c2c2"/></svg>
<div style="position:absolute;left:997px;top:17px;width:6px;height:30px;background:repeating-linear-gradient(#b0b0b0 0 2px,transparent 2px 4px);"></div>
<div style="position:absolute;left:1067px;top:17px;width:6px;height:30px;background:repeating-linear-gradient(#b0b0b0 0 2px,transparent 2px 4px);"></div>
<div style="position:absolute;left:1137px;top:17px;width:6px;height:30px;background:repeating-linear-gradient(#b0b0b0 0 2px,transparent 2px 4px);"></div>
<div style="position:absolute;left:1339px;top:17px;width:6px;height:30px;background:repeating-linear-gradient(#b0b0b0 0 2px,transparent 2px 4px);"></div>
<svg style="left:1016px;top:18px;" width="30" height="30" viewBox="0 0 30 30"><g fill="#fff" stroke="#333" stroke-width="1.2"><path d="M1,1 H7 L8,3 H12 V9 H1 Z"/><path d="M17,8 H23 L24,10 H29 V16 H17 Z"/><path d="M17,21 H23 L24,23 H29 V29 H17 Z"/></g><path d="M6,9 V26 H17 M6,13 H17" fill="none" stroke="#333" stroke-width="1.2"/></svg>
<svg style="left:1086px;top:19px;" width="30" height="28" viewBox="0 0 30 28"><path d="M1,1 H15 L21,7 V25 H1 Z" fill="#fff" stroke="#333" stroke-width="1.2"/><circle cx="7" cy="7" r="3" fill="none" stroke="#333"/><circle cx="12" cy="14" r="3" fill="none" stroke="#333"/><circle cx="7" cy="19" r="3" fill="none" stroke="#333"/><path d="M10,19 L16,25 L28,13" fill="none" stroke="#4f6fb8" stroke-width="3.2"/></svg>
<svg style="left:1156px;top:17px;" width="28" height="30" viewBox="0 0 28 30"><path d="M10,1 H21 L27,7 V25 H10 Z M1,6 H12 L18,12 V29 H1 Z" fill="#c2c2c2" stroke="#d4d4d4" stroke-width="1"/></svg>
<svg style="left:1204px;top:19px;" width="22" height="27" viewBox="0 0 22 27"><rect x="1" y="4" width="20" height="22" rx="1" fill="#fff" stroke="#333" stroke-width="1.4"/><rect x="3.5" y="0.8" width="15" height="7" rx="3" fill="#c8cbe8" stroke="#333" stroke-width="1.2"/></svg>
<svg style="left:1247px;top:20px;" width="22" height="24" viewBox="0 0 22 24"><rect x="0" y="4" width="22" height="4" fill="#c2c2c2"/><rect x="8" y="0" width="6" height="4" fill="#c2c2c2"/><path d="M2,8 L4,24 H18 L20,8 Z" fill="#c2c2c2"/></svg>
<svg style="left:1287px;top:17px;" width="31" height="30" viewBox="0 0 31 30"><rect x="1" y="1" width="20" height="20" fill="#c2c2c2" stroke="#d8d8d8"/><rect x="10" y="10" width="20" height="4" fill="#c2c2c2"/><path d="M12,14 L14,29 H27 L29,14 Z" fill="#c2c2c2"/></svg>
<svg style="left:1356px;top:16px;" width="33" height="31" viewBox="0 0 33 31"><g fill="none" stroke="#333" stroke-width="1.8"><rect x="14" y="1" width="5" height="5"/><rect x="10" y="12" width="5" height="5"/><rect x="18" y="12" width="5" height="5"/><rect x="1" y="25" width="5" height="5"/><rect x="10" y="25" width="5" height="5"/><rect x="18" y="25" width="5" height="5"/><rect x="27" y="25" width="5" height="5"/><path d="M16.5,6 V10 M12.5,17 V25 M20.5,17 V25 M10,15 L3.5,25 M23,15 L29.5,25"/></g></svg>
<svg style="left:1407px;top:29px;" width="11" height="7" viewBox="0 0 11 7"><path d="M0,0 H11 V2 H9.5 L5.5,7 L1.5,2 H0 Z" fill="#222"/></svg>
<svg style="left:1433px;top:17px;" width="29" height="29" viewBox="0 0 29 29"><rect x="8" y="8" width="9" height="9" fill="#c2c2c2"/><rect x="19" y="19" width="9" height="9" fill="#c2c2c2"/><path d="M0,12.5 H8 M17,12.5 H27 M12.5,0 V8 M12.5,17 V29" stroke="#c2c2c2" stroke-width="1.5"/></svg>
<svg style="left:1483px;top:29px;" width="11" height="7" viewBox="0 0 11 7"><path d="M0,0 H11 V1.5 L5.5,7 L0,1.5 Z" fill="#c2c2c2"/></svg>
<svg style="left:1512px;top:19px;" width="24" height="26" viewBox="0 0 24 26"><rect x="0" y="20" width="6" height="6" fill="#c2c2c2"/><rect x="18" y="0" width="6" height="6" fill="#c2c2c2"/><path d="M3,23 L21,3" stroke="#c2c2c2" stroke-width="1.5"/></svg>
<svg style="left:1556px;top:19px;" width="24" height="26" viewBox="0 0 24 26"><rect x="0" y="20" width="6" height="6" fill="#c2c2c2"/><rect x="18" y="0" width="6" height="6" fill="#c2c2c2"/><rect x="0" y="0" width="6" height="6" fill="#c2c2c2"/><path d="M3,3 V23 M3,3 H21" stroke="#c2c2c2" stroke-width="1.5"/></svg>
<svg style="left:1600px;top:19px;" width="24" height="26" viewBox="0 0 24 26"><rect x="0" y="20" width="6" height="6" fill="#c2c2c2"/><rect x="18" y="0" width="6" height="6" fill="#c2c2c2"/><rect x="0" y="0" width="6" height="6" fill="#c2c2c2"/><path d="M3,3 H21 M3,23 L21,3" stroke="#c2c2c2" stroke-width="1.5"/></svg>
<svg style="left:1644px;top:19px;" width="24" height="26" viewBox="0 0 24 26"><rect x="0" y="20" width="6" height="6" fill="#c2c2c2"/><rect x="18" y="0" width="6" height="6" fill="#c2c2c2"/><path d="M3,23 Q3,3 21,3" fill="none" stroke="#c2c2c2" stroke-width="1.5"/></svg>
<svg style="left:1688px;top:19px;" width="24" height="26" viewBox="0 0 24 26"><rect x="0" y="20" width="6" height="6" fill="#c2c2c2"/><rect x="18" y="0" width="6" height="6" fill="#c2c2c2"/><path d="M3,23 L21,3 M0,1 H6 M18,24 H24" stroke="#c2c2c2" stroke-width="1.5"/></svg>
<svg style="left:1730px;top:18px;" width="28" height="27" viewBox="0 0 28 27"><rect x="24" y="0" width="4" height="18" fill="#c2c2c2"/><rect x="0" y="22" width="18" height="4" fill="#c2c2c2"/><path d="M6,18 V7 H20 M17,4 L20,7 L17,10 M3,15 L6,18 L9,15" fill="none" stroke="#c2c2c2" stroke-width="1.5"/></svg>
<div style="position:absolute;left:896px;top:62px;width:430px;height:36px;background:linear-gradient(#ffffff 0%,#f4f4f4 10%,#dcdcdc 42%,#bebebe 75%,#a4a4a4 100%);"></div>
<div class="t" style="left:896px;top:67px;font-size:28px;letter-spacing:0.2px;color:#000;">Selection</div>
<div style="position:absolute;left:896px;top:148px;width:430px;height:36px;background:linear-gradient(#ffffff 0%,#f4f4f4 10%,#dcdcdc 42%,#bebebe 75%,#a4a4a4 100%);"></div>
<div class="t" style="left:896px;top:153px;font-size:28px;letter-spacing:1.0px;color:#000;">Tools</div>
<div style="position:absolute;left:896px;top:234px;width:430px;height:36px;background:linear-gradient(#ffffff 0%,#f4f4f4 10%,#dcdcdc 42%,#bebebe 75%,#a4a4a4 100%);"></div>
<div class="t" style="left:896px;top:239px;font-size:28px;letter-spacing:0.2px;color:#000;">Concept Modeling</div>
<div style="position:absolute;left:896px;top:98px;width:44px;height:44px;background:#939393;border-radius:7px;"></div>
<svg style="left:904px;top:104px;" width="24" height="32" viewBox="0 0 24 32"><path d="M17.2,28 L12,18" stroke="#333" stroke-width="3.6"/><path d="M5.9,3.3 L19.1,14.9 L6.4,20.5 Z" fill="#f0f0f0" stroke="#333" stroke-width="1.3" stroke-linejoin="miter"/></svg>
<svg style="left:948px;top:104px;" width="30" height="32" viewBox="0 0 30 32"><rect x="1" y="1.2" width="18.3" height="18.3" fill="none" stroke="#444" stroke-width="1.1" stroke-dasharray="2.2,1.6"/><rect x="4.5" y="5.8" width="11.1" height="10.1" fill="#f8f8f8" stroke="#555" stroke-width="1.8"/><path d="M20,20.5 L20,30 L22.3,27.8 L24.6,31 L26,30 L23.8,26.9 L27,26.5 Z" fill="#fff" stroke="#333" stroke-width="1"/></svg>
<svg style="left:991px;top:105px;" width="30" height="30" viewBox="0 0 30 30"><rect x="1" y="1.2" width="27.9" height="27.4" fill="none" stroke="#444" stroke-width="1.1" stroke-dasharray="2.2,1.6"/><g fill="none" stroke="#333" stroke-width="1.3"><rect x="5" y="5.3" width="6.6" height="6.6"/><rect x="18.2" y="5.3" width="6.6" height="6.6"/><rect x="5" y="18" width="6.6" height="6.6"/><rect x="18.2" y="18" width="6.6" height="6.6"/></g></svg>
<svg style="left:1041px;top:117px;" width="11" height="7" viewBox="0 0 11 7"><path d="M0,0 H11 V2 H9.5 L5.5,7 L1.5,2 H0 Z" fill="#222"/></svg>
<svg style="left:904px;top:190px;" width="30" height="32" viewBox="0 0 30 32"><path d="M11.5,14.5 C7.5,11 8.5,2.1 14.2,2.1 C19.9,2.1 20.9,11 16.9,14.5 V20.1 H11.5 Z" fill="#f4f4f4" stroke="#333" stroke-width="1.2"/><path d="M6.6,20.1 H21.4 L26.7,25.8 H1.3 Z" fill="#f4f4f4" stroke="#333" stroke-width="1.2"/><rect x="1.3" y="25.8" width="25.4" height="4.9" fill="#3a3a3a"/></svg>
<svg style="left:948px;top:190px;" width="30" height="32" viewBox="0 0 30 32"><path d="M14.25,0.9 L20.3,6.8 H16.1 V10.2 H12.4 V6.8 H8.2 Z" fill="#fff" stroke="#333" stroke-width="1.2"/><rect x="1.1" y="10.2" width="25.7" height="4.4" fill="#c4c4c4" stroke="#333" stroke-width="1.2"/><rect x="1.1" y="17" width="25.7" height="4.7" fill="#3a3a3a"/><path d="M12.2,21.7 H16.3 V24.3 H20.3 L14.25,31.1 L8.2,24.3 H12.2 Z" fill="#3a3a3a"/></svg>
<svg style="left:992px;top:190px;" width="30" height="32" viewBox="0 0 30 32"><rect x="1" y="1.1" width="25.9" height="4.5" fill="#3a3a3a"/><path d="M12.4,5.6 H15.8 V9.4 H20.8 L14.3,15.1 L7.8,9.4 H12.4 Z" fill="#3a3a3a"/><path d="M14.3,17.2 L20.4,22 H15.8 V26.2 H12.4 V22 H8.2 Z" fill="#fff" stroke="#333" stroke-width="1.2"/><rect x="1" y="26.2" width="25.9" height="4.5" fill="#c4c4c4" stroke="#333" stroke-width="1.2"/></svg>
<svg style="left:904px;top:283px;" width="30" height="30" viewBox="0 0 30 30"><path d="M1,1 H22 L28,7 V18 H1 Z" fill="#fff" stroke="#333" stroke-width="1.3"/><path d="M22,1 V7 H28" fill="none" stroke="#333" stroke-width="1.1"/></svg>
<div class="t" style="left:942px;top:280px;font-size:27px;color:#1e1e1e;letter-spacing:1.12px;">Literal Annotation</div>
<svg style="left:1306px;top:290px;" width="14" height="9" viewBox="0 0 14 9"><path d="M0,0 H14 V2.5 H12.5 L7,8.5 L1.5,2.5 H0 Z" fill="#111"/></svg>
<svg style="left:905px;top:324px;" width="30" height="30" viewBox="0 0 30 30"><path d="M1,1 H18 L24,7 V14 H1 Z" fill="#fff" stroke="#333" stroke-width="1.2"/><path d="M4,5 H14 M4,9 H20" stroke="#333" stroke-width="1.1"/><text x="0" y="23" font-size="8.5" font-weight="bold" font-family="Liberation Sans" fill="#333">HTML</text></svg>
<div class="t" style="left:942px;top:324px;font-size:27px;color:#1e1e1e;letter-spacing:0.7px;">Note(HTML Text)</div>
<svg style="left:905px;top:368px;" width="30" height="30" viewBox="0 0 30 30"><rect x="12" y="1" width="12" height="11" fill="#fff" stroke="#333" stroke-width="1.1"/><path d="M15,4.5 H21 M15,7.5 H21" stroke="#333"/><path d="M1,25 L12,12" stroke="#555" stroke-width="1" stroke-dasharray="2,2"/></svg>
<div class="t" style="left:942px;top:368px;font-size:27px;color:#1e1e1e;letter-spacing:0.86px;">Anchor</div>
<svg style="left:904px;top:413px;" width="30" height="30" viewBox="0 0 30 30"><rect x="0.75" y="0.75" width="27.5" height="22.5" fill="url(#clsg)" stroke="#555" stroke-width="1.5"/><path d="M1,15.5 H28 M1,19 H28" stroke="#555" stroke-width="1.2"/></svg>
<div class="t" style="left:942px;top:412px;font-size:27px;color:#1e1e1e;letter-spacing:0.35px;">Class</div>
<svg style="left:1306px;top:422px;" width="14" height="9" viewBox="0 0 14 9"><path d="M0,0 H14 V2.5 H12.5 L7,8.5 L1.5,2.5 H0 Z" fill="#111"/></svg>
<svg style="left:904px;top:457px;" width="30" height="30" viewBox="0 0 30 30"><rect x="0.75" y="0.75" width="27.5" height="22.5" fill="url(#clsg)" stroke="#555" stroke-width="1.5"/><path d="M1,15.5 H28 M1,19 H28" stroke="#555" stroke-width="1.2"/></svg>
<div class="t" style="left:942px;top:456px;font-size:27px;color:#1e1e1e;letter-spacing:1.2999999999999998px;">Anything</div>
<svg style="left:904px;top:501px;" width="30" height="30" viewBox="0 0 30 30"><rect x="0.75" y="0.75" width="27.5" height="22.5" fill="url(#clsg)" stroke="#555" stroke-width="1.5"/><path d="M1,15.5 H28 M1,19 H28" stroke="#555" stroke-width="1.2"/></svg>
<div class="t" style="left:942px;top:500px;font-size:27px;color:#1e1e1e;letter-spacing:0.79px;">Anonymous Union</div>
<svg style="left:906px;top:542px;" width="30" height="30" viewBox="0 0 30 30"><path d="M1,1 H24 M12.5,1 V7" stroke="#333" stroke-width="1.2"/><rect x="0.75" y="8" width="23.5" height="19" fill="url(#clsg)" stroke="#555" stroke-width="1.3"/><path d="M1,20 H24 M1,23 H24" stroke="#555" stroke-width="1.1"/></svg>
<div class="t" style="left:942px;top:544px;font-size:27px;color:#1e1e1e;letter-spacing:0.59px;">Association Class</div>
<svg style="left:906px;top:590px;" width="30" height="30" viewBox="0 0 30 30"><rect x="0.75" y="0.75" width="23.5" height="18" fill="url(#clsg)" stroke="#555" stroke-width="1.3"/><text x="10" y="15" font-size="13" font-family="Liberation Sans" fill="#333">E</text></svg>
<div class="t" style="left:942px;top:588px;font-size:27px;color:#1e1e1e;letter-spacing:0.72px;">Enumeration</div>
<svg style="left:906px;top:632px;" width="30" height="30" viewBox="0 0 30 30"><path d="M1,22 L23,1" stroke="#3e54c4" stroke-width="2.2"/></svg>
<div class="t" style="left:942px;top:632px;font-size:27px;color:#1e1e1e;letter-spacing:0.38px;">Inverse Object Properties</div>
<svg style="left:906px;top:676px;" width="30" height="30" viewBox="0 0 30 30"><path d="M1,22 L23,1" stroke="#3e54c4" stroke-width="2.2"/><path d="M13,1 H24 V12" fill="none" stroke="#3e54c4" stroke-width="2.2"/></svg>
<div class="t" style="left:942px;top:676px;font-size:27px;color:#1e1e1e;letter-spacing:0.68px;">Unidirectional Object Property</div>
<svg style="left:904px;top:719px;" width="30" height="30" viewBox="0 0 30 30"><path d="M7,17 L24,1" stroke="#3e54c4" stroke-width="1.5"/><path d="M14,1 H25 V11" fill="none" stroke="#3e54c4" stroke-width="1.5"/><rect x="0" y="18" width="10" height="9" fill="#fff"/><path d="M0,18 H10 V27" fill="none" stroke="#333" stroke-width="1"/></svg>
<div class="t" style="left:942px;top:720px;font-size:27px;color:#1e1e1e;letter-spacing:0.09999999999999998px;">Subclass</div>
<svg style="left:903px;top:762px;" width="30" height="30" viewBox="0 0 30 30"><path d="M2,26 L26,2" stroke="#3e54c4" stroke-width="2.2"/><path d="M15,1 H27 V13 M1,15 V27 H13 Z" fill="none" stroke="#3e54c4" stroke-width="2"/><path d="M2,15 L2,26 L13,26 Z" fill="#fff" stroke="#3e54c4" stroke-width="2"/></svg>
<div class="t" style="left:942px;top:764px;font-size:27px;color:#1e1e1e;letter-spacing:0.33px;">Equivalent Class</div>
<svg style="left:904px;top:808px;" width="30" height="30" viewBox="0 0 30 30"><path d="M3,22 L25,1" stroke="#3e54c4" stroke-width="2"/><path d="M15,1 H25 V11" fill="none" stroke="#3e54c4" stroke-width="2"/><circle cx="3" cy="4" r="2" fill="none" stroke="#3e54c4" stroke-width="1.3"/><circle cx="8" cy="4" r="2" fill="none" stroke="#3e54c4" stroke-width="1.3"/><path d="M10,4 H13" stroke="#3e54c4" stroke-width="1.3"/></svg>
<div class="t" style="left:942px;top:808px;font-size:27px;color:#1e1e1e;letter-spacing:0.7px;">Property Restriction</div>
<svg style="left:904px;top:850px;" width="30" height="30" viewBox="0 0 30 30"><path d="M1,24 L24,2" stroke="#3e54c4" stroke-width="2.6" stroke-dasharray="4,3"/><path d="M15,1 H25 V11" fill="none" stroke="#3e54c4" stroke-width="2"/><text x="16" y="26" font-size="9" font-family="Liberation Sans" fill="#444">C</text></svg>
<div class="t" style="left:942px;top:852px;font-size:27px;color:#1e1e1e;letter-spacing:0.94px;">Complement of</div>
<svg style="left:904px;top:894px;" width="30" height="30" viewBox="0 0 30 30"><path d="M1,24 L24,2" stroke="#3e54c4" stroke-width="2.6" stroke-dasharray="4,3"/><path d="M15,1 H25 V11" fill="none" stroke="#3e54c4" stroke-width="2"/><text x="19" y="26" font-size="9" font-weight="bold" font-family="Liberation Sans" fill="#333">D</text></svg>
<div class="t" style="left:942px;top:896px;font-size:27px;color:#1e1e1e;letter-spacing:1.2999999999999998px;">Disjoint With</div>
<svg style="left:906px;top:938px;" width="30" height="30" viewBox="0 0 30 30"><path d="M3,24 L24,2" stroke="#3e54c4" stroke-width="2.6" stroke-dasharray="4,3"/><path d="M15,1 H25 V11" fill="none" stroke="#3e54c4" stroke-width="2"/></svg>
<div class="t" style="left:942px;top:940px;font-size:27px;color:#1e1e1e;letter-spacing:0.3px;">Dependency</div>
<svg style="left:1100px;top:986px;" width="22" height="12" viewBox="0 0 22 12"><path d="M0,0 H22 L11,12 Z" fill="#555"/></svg>
<div style="position:absolute;left:1333px;top:58px;width:443px;height:1102px;overflow:hidden"><div style="position:absolute;left:-1333px;top:-58px;width:1px;height:1px">
<div style="position:absolute;left:1333px;top:58px;width:443px;height:1102px;background:#fff;"></div>
<div style="position:absolute;left:1344px;top:70px;width:500px;height:1200px;border:2px solid #555;"></div>
<div style="position:absolute;left:1344px;top:114px;width:500px;height:2px;background:#555;"></div>
<div class="t" style="left:1356px;top:78px;font-size:22px;font-weight:bold;color:#000;">package</div>
<div class="t" style="left:1455px;top:78px;font-size:22px;color:#000;">Varieties of Wine[</div>
<svg style="left:1636px;top:76px;" width="33" height="32" viewBox="0 0 33 32"><path d="M0.75,0.75 H24 L32.25,9 V31.25 H0.75 Z" fill="#fff" stroke="#888" stroke-width="1.2"/><path d="M24,0.75 V9 H32.25" fill="none" stroke="#888"/><rect x="11" y="6" width="11" height="7" fill="#9aa6c8" stroke="#555"/><path d="M16.5,13 V17 M8,17 H25 M8,17 V20 M25,17 V20" stroke="#444" stroke-width="1.2"/><rect x="3" y="20" width="10" height="7" fill="#9aa6c8" stroke="#555"/><rect x="20" y="20" width="10" height="7" fill="#9aa6c8" stroke="#555"/></svg>
<div class="t" style="left:1677px;top:78px;font-size:22px;color:#000;">Example ]</div>
<svg style="left:0;top:0" width="1776" height="1325"><path d="M1706,234 L1706,284" fill="none" stroke="#444" stroke-width="1.6"/></svg>
<svg style="left:0;top:0" width="1776" height="1325"><path d="M1482,360 L1482,396" fill="none" stroke="#444" stroke-width="1.6"/></svg>
<svg style="left:0;top:0" width="1776" height="1325"><path d="M1726,354 L1726,396" fill="none" stroke="#444" stroke-width="2.2"/></svg>
<svg style="left:0;top:0" width="1776" height="1325"><path d="M1530,381 L1530,376 L1776,376" fill="none" stroke="#444" stroke-width="1.6"/></svg>
<svg style="left:0;top:0" width="1776" height="1325"><path d="M1720,570 L1720,620" fill="none" stroke="#444" stroke-width="1.6"/></svg>
<svg style="left:0;top:0" width="1776" height="1325"><path d="M1502,626 L1502,676" fill="none" stroke="#444" stroke-width="1.6"/></svg>
<svg style="left:0;top:0" width="1776" height="1325"><path d="M1601,704 L1776,704" fill="none" stroke="#444" stroke-width="1.6"/></svg>
<svg style="left:0;top:0" width="1776" height="1325"><path d="M1748,690 L1748,718" fill="none" stroke="#444" stroke-width="1.6"/></svg>
<svg style="left:0;top:0" width="1776" height="1325"><path d="M1525,878 L1525,928" fill="none" stroke="#444" stroke-width="1.6"/></svg>
<svg style="left:0;top:0" width="1776" height="1325"><path d="M1762,892 L1762,928" fill="none" stroke="#444" stroke-width="1.6"/></svg>
<svg style="left:0;top:0" width="1776" height="1325"><path d="M1615,956 L1642,956" fill="none" stroke="#444" stroke-width="1.6"/></svg>
<svg style="left:0;top:0" width="1776" height="1325"><path d="M1628,956 L1628,1040" fill="none" stroke="#444" stroke-width="1.6"/></svg>
<svg style="left:0;top:0" width="1776" height="1325"><path d="M1769,1077 L1776,1077" fill="none" stroke="#444" stroke-width="1.6"/></svg>
<div style="position:absolute;left:1619px;top:177px;width:127px;height:48px;background:#b2b2b2;"></div>
<div style="position:absolute;left:1614px;top:172px;width:127px;height:48px;background:linear-gradient(100deg,#fdcc96 0%,#fee2b4 45%,#fffcd8 100%);border:1.5px solid #a07a5a;"><div class="t" style="left:29.299999999999955px;top:6.5px;font-size:22px;font-weight:bold;color:#000;">Merlot</div></div>
<div style="position:absolute;left:1633px;top:289px;width:174px;height:56px;background:#b2b2b2;"></div>
<div style="position:absolute;left:1628px;top:284px;width:174px;height:56px;background:linear-gradient(100deg,#fdcc96 0%,#fee2b4 45%,#fffcd8 100%);border:1.5px solid #a07a5a;"><div class="t" style="left:60.5px;top:6.5px;font-size:22px;font-weight:bold;color:#000;">Soft</div></div>
<div style="position:absolute;left:1395px;top:303px;width:231px;height:48px;background:#b2b2b2;"></div>
<div style="position:absolute;left:1390px;top:298px;width:231px;height:48px;background:linear-gradient(100deg,#fdcc96 0%,#fee2b4 45%,#fffcd8 100%);border:1.5px solid #a07a5a;"><div class="t" style="left:5.0px;top:6.5px;font-size:22px;font-weight:bold;color:#000;">Cabernet Sauvignon</div></div>
<div style="position:absolute;left:1395px;top:401px;width:183px;height:57px;background:#b2b2b2;"></div>
<div style="position:absolute;left:1390px;top:396px;width:183px;height:57px;background:linear-gradient(100deg,#fdcc96 0%,#fee2b4 45%,#fffcd8 100%);border:1.5px solid #a07a5a;"><div class="t" style="left:51.09999999999991px;top:6.5px;font-size:22px;font-weight:bold;color:#000;">Tannic</div></div>
<div style="position:absolute;left:1661px;top:401px;width:274px;height:70px;background:#b2b2b2;"></div>
<div style="position:absolute;left:1656px;top:396px;width:274px;height:70px;background:linear-gradient(100deg,#fdcc96 0%,#fee2b4 45%,#fffcd8 100%);border:1.5px solid #a07a5a;"><div class="t" style="left:11.0px;top:6.5px;font-size:22px;font-weight:bold;color:#000;">Black Cherry, Raspberry</div></div>
<div style="position:absolute;left:1675px;top:513px;width:139px;height:48px;background:#b2b2b2;"></div>
<div style="position:absolute;left:1670px;top:508px;width:139px;height:48px;background:linear-gradient(100deg,#fdcc96 0%,#fee2b4 45%,#fffcd8 100%);border:1.5px solid #a07a5a;"><div class="t" style="left:18.0px;top:6.5px;font-size:22px;font-weight:bold;color:#000;">Zinfandel</div></div>
<div style="position:absolute;left:1437px;top:569px;width:117px;height:49px;background:#b2b2b2;"></div>
<div style="position:absolute;left:1432px;top:564px;width:117px;height:49px;background:linear-gradient(100deg,#fdcc96 0%,#fee2b4 45%,#fffcd8 100%);border:1.5px solid #a07a5a;"><div class="t" style="left:4.7999999999999545px;top:6.5px;font-size:22px;font-weight:bold;color:#000;">Garnacha</div></div>
<div style="position:absolute;left:1633px;top:625px;width:189px;height:56px;background:#b2b2b2;"></div>
<div style="position:absolute;left:1628px;top:620px;width:189px;height:56px;background:linear-gradient(100deg,#fdcc96 0%,#fee2b4 45%,#fffcd8 100%);border:1.5px solid #a07a5a;"><div class="t" style="left:64.70000000000005px;top:6.5px;font-size:22px;font-weight:bold;color:#000;">Spicy</div></div>
<div style="position:absolute;left:1423px;top:681px;width:169px;height:56px;background:#b2b2b2;"></div>
<div style="position:absolute;left:1418px;top:676px;width:169px;height:56px;background:linear-gradient(100deg,#fdcc96 0%,#fee2b4 45%,#fffcd8 100%);border:1.5px solid #a07a5a;"><div class="t" style="left:57.0px;top:6.5px;font-size:22px;font-weight:bold;color:#000;">Soft</div></div>
<div style="position:absolute;left:1675px;top:723px;width:240px;height:70px;background:#b2b2b2;"></div>
<div style="position:absolute;left:1670px;top:718px;width:240px;height:70px;background:linear-gradient(100deg,#fdcc96 0%,#fee2b4 45%,#fffcd8 100%);border:1.5px solid #a07a5a;"><div class="t" style="left:18.799999999999955px;top:6.5px;font-size:22px;font-weight:bold;color:#000;">Strawberry, Cherry</div></div>
<div style="position:absolute;left:1465px;top:821px;width:141px;height:48px;background:#b2b2b2;"></div>
<div style="position:absolute;left:1460px;top:816px;width:141px;height:48px;background:linear-gradient(100deg,#fdcc96 0%,#fee2b4 45%,#fffcd8 100%);border:1.5px solid #a07a5a;"><div class="t" style="left:11.099999999999909px;top:6.5px;font-size:22px;font-weight:bold;color:#000;">St. Laurent</div></div>
<div style="position:absolute;left:1689px;top:835px;width:120px;height:49px;background:#b2b2b2;"></div>
<div style="position:absolute;left:1684px;top:830px;width:120px;height:49px;background:linear-gradient(100deg,#fdcc96 0%,#fee2b4 45%,#fffcd8 100%);border:1.5px solid #a07a5a;"><div class="t" style="left:25.299999999999955px;top:6.5px;font-size:22px;font-weight:bold;color:#000;">Gamay</div></div>
<div style="position:absolute;left:1437px;top:933px;width:169px;height:62px;background:#b2b2b2;"></div>
<div style="position:absolute;left:1432px;top:928px;width:169px;height:62px;background:linear-gradient(100deg,#fdcc96 0%,#fee2b4 45%,#fffcd8 100%);border:1.5px solid #a07a5a;"><div class="t" style="left:55.40000000000009px;top:6.5px;font-size:22px;font-weight:bold;color:#000;">Soft</div></div>
<div style="position:absolute;left:1661px;top:933px;width:181px;height:57px;background:#b2b2b2;"></div>
<div style="position:absolute;left:1656px;top:928px;width:181px;height:57px;background:linear-gradient(100deg,#fdcc96 0%,#fee2b4 45%,#fffcd8 100%);border:1.5px solid #a07a5a;"><div class="t" style="left:60.700000000000045px;top:6.5px;font-size:22px;font-weight:bold;color:#000;">Juicy</div></div>
<div style="position:absolute;left:1493px;top:1045px;width:267px;height:70px;background:#b2b2b2;"></div>
<div style="position:absolute;left:1488px;top:1040px;width:267px;height:70px;background:linear-gradient(100deg,#fdcc96 0%,#fee2b4 45%,#fffcd8 100%);border:1.5px solid #a07a5a;"><div class="t" style="left:14.900000000000091px;top:6.5px;font-size:22px;font-weight:bold;color:#000;">Tart Cherry, Cranberry</div></div>
<svg style="left:0;top:0" width="1776" height="1325"><path d="M1706,220 L1714,234 L1698,234 Z" fill="#fff" stroke="#444" stroke-width="1.6"/></svg>
<svg style="left:0;top:0" width="1776" height="1325"><path d="M1482,346 L1490,360 L1474,360 Z" fill="#fff" stroke="#444" stroke-width="1.6"/></svg>
<svg style="left:0;top:0" width="1776" height="1325"><path d="M1726,340 L1734,354 L1718,354 Z" fill="#fff" stroke="#444" stroke-width="1.6"/></svg>
<svg style="left:0;top:0" width="1776" height="1325"><path d="M1530,396 L1538,382 L1522,382 Z" fill="#fff" stroke="#444" stroke-width="1.6"/></svg>
<svg style="left:0;top:0" width="1776" height="1325"><path d="M1720,556 L1728,570 L1712,570 Z" fill="#fff" stroke="#444" stroke-width="1.6"/></svg>
<svg style="left:0;top:0" width="1776" height="1325"><path d="M1502,613 L1510,627 L1494,627 Z" fill="#fff" stroke="#444" stroke-width="1.6"/></svg>
<svg style="left:0;top:0" width="1776" height="1325"><path d="M1587,704 L1601,696 L1601,712 Z" fill="#fff" stroke="#444" stroke-width="1.6"/></svg>
<svg style="left:0;top:0" width="1776" height="1325"><path d="M1748,676 L1756,690 L1740,690 Z" fill="#fff" stroke="#444" stroke-width="1.6"/></svg>
<svg style="left:0;top:0" width="1776" height="1325"><path d="M1525,864 L1533,878 L1517,878 Z" fill="#fff" stroke="#444" stroke-width="1.6"/></svg>
<svg style="left:0;top:0" width="1776" height="1325"><path d="M1762,879 L1770,893 L1754,893 Z" fill="#fff" stroke="#444" stroke-width="1.6"/></svg>
<svg style="left:0;top:0" width="1776" height="1325"><path d="M1601,956 L1615,948 L1615,964 Z" fill="#fff" stroke="#444" stroke-width="1.6"/></svg>
<svg style="left:0;top:0" width="1776" height="1325"><path d="M1656,956 L1642,948 L1642,964 Z" fill="#fff" stroke="#444" stroke-width="1.6"/></svg>
<svg style="left:0;top:0" width="1776" height="1325"><path d="M1755,1077 L1769,1069 L1769,1085 Z" fill="#fff" stroke="#444" stroke-width="1.6"/></svg>
<div class="t" style="left:1740px;top:691.5px;font-size:22px;color:#000;">{complete, disjoint}</div>
<div class="t" style="left:1628px;top:986px;font-size:22px;color:#000;">{complete, disjoint}</div>
</div></div>
<div style="position:absolute;left:1333px;top:1130px;width:443px;height:30px;background:linear-gradient(rgba(255,255,255,0),rgba(200,200,200,0.5));"></div>
<div style="position:absolute;left:344px;top:132px;width:524px;height:1082px;box-shadow:0 5px 26px rgba(0,0,0,0.20);"></div>
<div style="position:absolute;left:344px;top:132px;width:524px;height:1082px;background:rgba(255,255,255,0.94);border:1px solid rgba(0,0,0,0.12);border-top-color:rgba(0,0,0,0.18);"></div>
<div class="t" style="left:385.5px;top:146px;font-size:29px;color:#000;color:#000;letter-spacing:0.52px;">Create Element</div>
<div class="t" style="left:815.5px;top:145px;font-size:29px;color:#000;line-height:1;">E</div>
<svg style="left:762px;top:148px;" width="23" height="22" viewBox="0 0 23 22"><path d="M11.5,1 L22.2,11.3 H16.4 V21.2 H6.6 V11.3 H0.8 Z" fill="none" stroke="#000" stroke-width="1.6" stroke-linejoin="miter"/></svg>
<svg style="left:790.5px;top:149px;" width="22" height="21" viewBox="0 0 22 21"><path d="M7.5,7 H14.5 V14 H7.5 Z M7.5,7 V3.7 A3.3,3.3 0 1 0 4.2,7 Z M14.5,7 V3.7 A3.3,3.3 0 1 1 17.8,7 Z M7.5,14 V17.3 A3.3,3.3 0 1 1 4.2,14 Z M14.5,14 V17.3 A3.3,3.3 0 1 0 17.8,14 Z" fill="none" stroke="#000" stroke-width="1.9"/></svg>
<div class="t" style="left:385.5px;top:184px;font-size:29px;color:#000;color:#000;letter-spacing:0.83px;">Create Diagram</div>
<div class="t" style="left:815.5px;top:183px;font-size:29px;color:#000;line-height:1;">D</div>
<svg style="left:762px;top:186px;" width="23" height="22" viewBox="0 0 23 22"><path d="M11.5,1 L22.2,11.3 H16.4 V21.2 H6.6 V11.3 H0.8 Z" fill="none" stroke="#000" stroke-width="1.6" stroke-linejoin="miter"/></svg>
<svg style="left:790.5px;top:187px;" width="22" height="21" viewBox="0 0 22 21"><path d="M7.5,7 H14.5 V14 H7.5 Z M7.5,7 V3.7 A3.3,3.3 0 1 0 4.2,7 Z M14.5,7 V3.7 A3.3,3.3 0 1 1 17.8,7 Z M7.5,14 V17.3 A3.3,3.3 0 1 1 4.2,14 Z M14.5,14 V17.3 A3.3,3.3 0 1 0 17.8,14 Z" fill="none" stroke="#000" stroke-width="1.9"/></svg>
<div class="t" style="left:385.5px;top:222px;font-size:29px;color:#000;color:#000;letter-spacing:0.62px;">Create Relation</div>
<svg style="left:832px;top:226px;" width="18" height="19" viewBox="0 0 18 19"><path d="M0,0 L18,9.5 L0,19 Z" fill="#444"/></svg>
<div class="t" style="left:385.5px;top:284px;font-size:29px;color:#000;color:#000;letter-spacing:0.84px;">Specification</div>
<svg style="left:812px;top:284px;" width="28" height="27" viewBox="0 0 28 27"><path d="M1.7,16 L11,7.3 V13 H18.3 V1 H26 V14 Q26,20.8 19,20.8 H11 V25.6 Z" fill="none" stroke="#222" stroke-width="1.7" stroke-linejoin="miter"/></svg>
<div class="t" style="left:385.5px;top:322px;font-size:29px;color:#000;color:#000;letter-spacing:1.35px;">Validation</div>
<svg style="left:832px;top:326px;" width="18" height="19" viewBox="0 0 18 19"><path d="M0,0 L18,9.5 L0,19 Z" fill="#444"/></svg>
<div class="t" style="left:385.5px;top:384px;font-size:29px;color:#000;color:#000;letter-spacing:0.89px;">Open in New Containment Tree</div>
<div class="t" style="left:385.5px;top:422px;font-size:29px;color:#000;color:#000;letter-spacing:1.1px;">Go To</div>
<svg style="left:832px;top:426px;" width="18" height="19" viewBox="0 0 18 19"><path d="M0,0 L18,9.5 L0,19 Z" fill="#444"/></svg>
<div class="t" style="left:385.5px;top:484px;font-size:29px;color:#000;color:#000;letter-spacing:0.4px;">Related Elements</div>
<svg style="left:832px;top:488px;" width="18" height="19" viewBox="0 0 18 19"><path d="M0,0 L18,9.5 L0,19 Z" fill="#444"/></svg>
<div class="t" style="left:385.5px;top:522px;font-size:29px;color:#000;color:#000;letter-spacing:0.79px;">Refactor</div>
<svg style="left:832px;top:526px;" width="18" height="19" viewBox="0 0 18 19"><path d="M0,0 L18,9.5 L0,19 Z" fill="#444"/></svg>
<div class="t" style="left:385.5px;top:560px;font-size:29px;color:#000;color:#000;letter-spacing:1.1px;">Tools</div>
<svg style="left:832px;top:564px;" width="18" height="19" viewBox="0 0 18 19"><path d="M0,0 L18,9.5 L0,19 Z" fill="#444"/></svg>
<div class="t" style="left:385.5px;top:622px;font-size:29px;color:#000;color:#000;letter-spacing:0.64px;">Stereotype</div>
<div class="t" style="left:385.5px;top:660px;font-size:29px;color:#000;color:#000;letter-spacing:0.8px;">Apply Profiles</div>
<div class="t" style="left:385.5px;top:722px;font-size:29px;color:#000;color:#000;letter-spacing:0.4px;">Rename</div>
<div class="t" style="left:805px;top:722px;font-size:29px;color:#000;letter-spacing:0.7px;">F2</div>
<div class="t" style="left:425px;top:760px;font-size:29px;color:#000;color:#000;letter-spacing:0.77px;">Copy</div>
<div class="t" style="left:815.5px;top:759px;font-size:29px;color:#000;line-height:1;">C</div>
<svg style="left:790.5px;top:763px;" width="22" height="21" viewBox="0 0 22 21"><path d="M7.5,7 H14.5 V14 H7.5 Z M7.5,7 V3.7 A3.3,3.3 0 1 0 4.2,7 Z M14.5,7 V3.7 A3.3,3.3 0 1 1 17.8,7 Z M7.5,14 V17.3 A3.3,3.3 0 1 1 4.2,14 Z M14.5,14 V17.3 A3.3,3.3 0 1 0 17.8,14 Z" fill="none" stroke="#000" stroke-width="1.9"/></svg>
<svg style="left:389px;top:757px;" width="27" height="31" viewBox="0 0 27 31"><path d="M8.5,0.8 H20 L25.5,6.3 V25.5 H8.5 Z" fill="#f8f8f8" stroke="#555" stroke-width="1.3"/><path d="M20,0.8 V6.3 H25.5" fill="none" stroke="#555" stroke-width="1.1"/><path d="M0.8,5.5 H12 L17.5,11 V30 H0.8 Z" fill="#f8f8f8" stroke="#555" stroke-width="1.3"/><path d="M12,5.5 V11 H17.5" fill="none" stroke="#555" stroke-width="1.1"/></svg>
<div class="t" style="left:385.5px;top:798px;font-size:29px;color:#000;color:#000;letter-spacing:0.15000000000000002px;">Copy URL</div>
<div class="t" style="left:385.5px;top:836px;font-size:29px;color:#000;color:#000;letter-spacing:0.7px;">Copy Element Hyperlink</div>
<div class="t" style="left:425px;top:874px;font-size:29px;color:#000;color:#000;letter-spacing:0.4px;">Paste</div>
<div class="t" style="left:815.5px;top:873px;font-size:29px;color:#000;line-height:1;">V</div>
<svg style="left:790.5px;top:877px;" width="22" height="21" viewBox="0 0 22 21"><path d="M7.5,7 H14.5 V14 H7.5 Z M7.5,7 V3.7 A3.3,3.3 0 1 0 4.2,7 Z M14.5,7 V3.7 A3.3,3.3 0 1 1 17.8,7 Z M7.5,14 V17.3 A3.3,3.3 0 1 1 4.2,14 Z M14.5,14 V17.3 A3.3,3.3 0 1 0 17.8,14 Z" fill="none" stroke="#000" stroke-width="1.9"/></svg>
<svg style="left:391px;top:873px;" width="23" height="27" viewBox="0 0 23 27"><rect x="1" y="4" width="21" height="22" rx="0.5" fill="#f6f6f6" stroke="#555" stroke-width="1.4"/><rect x="3" y="0.8" width="17" height="7" rx="3" fill="#c9cce9" stroke="#555" stroke-width="1.2"/></svg>
<div class="t" style="left:425px;top:912px;font-size:29px;color:#000;color:#000;letter-spacing:1.1px;">Cut</div>
<div class="t" style="left:815.5px;top:911px;font-size:29px;color:#000;line-height:1;">X</div>
<svg style="left:790.5px;top:915px;" width="22" height="21" viewBox="0 0 22 21"><path d="M7.5,7 H14.5 V14 H7.5 Z M7.5,7 V3.7 A3.3,3.3 0 1 0 4.2,7 Z M14.5,7 V3.7 A3.3,3.3 0 1 1 17.8,7 Z M7.5,14 V17.3 A3.3,3.3 0 1 1 4.2,14 Z M14.5,14 V17.3 A3.3,3.3 0 1 0 17.8,14 Z" fill="none" stroke="#000" stroke-width="1.9"/></svg>
<svg style="left:386px;top:906px;" width="32" height="32" viewBox="0 0 32 32"><path d="M9,13 L30,28.5 M9,23 L30,8.5" stroke="#444" stroke-width="3.4"/><circle cx="6.2" cy="10.5" r="3.6" fill="#fff" stroke="#4558c8" stroke-width="1.8"/><circle cx="6.2" cy="25.2" r="3.6" fill="#fff" stroke="#4558c8" stroke-width="1.8"/></svg>
<div class="t" style="left:425px;top:950px;font-size:29px;color:#000;color:#000;letter-spacing:0.42px;">Delete</div>
<svg style="left:807px;top:952px;" width="32" height="22" viewBox="0 0 32 22"><path d="M1.5,1 H21 L30,11 L21,21 H1.5 Z" fill="none" stroke="#111" stroke-width="2"/><path d="M7,5 L17,17 M17,5 L7,17" stroke="#111" stroke-width="2.2"/></svg>
<svg style="left:391px;top:950px;" width="23" height="25" viewBox="0 0 23 25"><rect x="1" y="4.5" width="21" height="3" rx="1" fill="#c8cbe8" stroke="#555" stroke-width="1.2"/><path d="M8,4.5 Q8,1 11.5,1 Q15,1 15,4.5" fill="#c8cbe8" stroke="#555" stroke-width="1.2"/><path d="M3,7.5 L4.5,23.5 H18.5 L20,7.5 Z" fill="#c8cbe8" stroke="#555" stroke-width="1.3"/><path d="M8,11 V20 M11.5,11 V20 M15,11 V20" stroke="#555" stroke-width="1.3"/></svg>
<div class="t" style="left:385.5px;top:1012px;font-size:29px;color:#000;color:#000;letter-spacing:1.07px;">Find...</div>
<div class="t" style="left:385.5px;top:1074px;font-size:29px;color:#000;color:#000;letter-spacing:0.31px;">Project Usages</div>
<svg style="left:832px;top:1078px;" width="18" height="19" viewBox="0 0 18 19"><path d="M0,0 L18,9.5 L0,19 Z" fill="#444"/></svg>
<div class="t" style="left:385.5px;top:1136px;font-size:29px;color:#000;color:#000;letter-spacing:0.56px;">Generate Report...</div>
<svg style="left:832px;top:1140px;" width="18" height="19" viewBox="0 0 18 19"><path d="M0,0 L18,9.5 L0,19 Z" fill="#444"/></svg>
<div style="position:absolute;left:344px;top:1168px;width:524px;height:38px;background:#0b5bd8;"></div>
<div class="t" style="left:385.5px;top:1174px;font-size:29px;color:#000;color:#fff;letter-spacing:1.09px;">Concept Modeling</div>
<svg style="left:832px;top:1178px;" width="18" height="19" viewBox="0 0 18 19"><path d="M0,0 L18,9.5 L0,19 Z" fill="#fff"/></svg>
<div style="position:absolute;left:345px;top:263px;width:521px;height:2px;background:#d6d6d6;"></div>
<div style="position:absolute;left:345px;top:363px;width:521px;height:2px;background:#d6d6d6;"></div>
<div style="position:absolute;left:345px;top:463px;width:521px;height:2px;background:#d6d6d6;"></div>
<div style="position:absolute;left:345px;top:601px;width:521px;height:2px;background:#d6d6d6;"></div>
<div style="position:absolute;left:345px;top:701px;width:521px;height:2px;background:#d6d6d6;"></div>
<div style="position:absolute;left:345px;top:991px;width:521px;height:2px;background:#d6d6d6;"></div>
<div style="position:absolute;left:345px;top:1053px;width:521px;height:2px;background:#d6d6d6;"></div>
<div style="position:absolute;left:345px;top:1115px;width:521px;height:2px;background:#d6d6d6;"></div>
<div style="position:absolute;left:868px;top:1160px;width:902px;height:175px;box-shadow:0 2px 14px rgba(0,0,0,0.22);"></div>
<div style="position:absolute;left:868px;top:1160px;width:902px;height:175px;background:rgba(255,255,255,0.94);border:1px solid rgba(0,0,0,0.12);"></div>
<div class="t" style="left:909.5px;top:1174px;font-size:29px;color:#000;color:#000;letter-spacing:0.86px;">Create Concept Model</div>
<div class="t" style="left:1718px;top:1173px;font-size:29px;color:#000;line-height:1;">N</div>
<svg style="left:1664px;top:1177px;" width="24" height="21" viewBox="0 0 24 21"><path d="M0,1 H8 L16,20 H24 M14,1 H24" fill="none" stroke="#000" stroke-width="1.5"/></svg>
<svg style="left:1692px;top:1176px;" width="23" height="22" viewBox="0 0 23 22"><path d="M11.5,1 L22.2,11.3 H16.4 V21.2 H6.6 V11.3 H0.8 Z" fill="none" stroke="#000" stroke-width="1.6" stroke-linejoin="miter"/></svg>
<div class="t" style="left:909.5px;top:1212px;font-size:29px;color:#000;color:#000;letter-spacing:0.82px;">Export Model to OWL</div>
<div class="t" style="left:1718px;top:1211px;font-size:29px;color:#000;line-height:1;">O</div>
<svg style="left:1664px;top:1215px;" width="24" height="21" viewBox="0 0 24 21"><path d="M0,1 H8 L16,20 H24 M14,1 H24" fill="none" stroke="#000" stroke-width="1.5"/></svg>
<svg style="left:1692px;top:1214px;" width="23" height="22" viewBox="0 0 23 22"><path d="M11.5,1 L22.2,11.3 H16.4 V21.2 H6.6 V11.3 H0.8 Z" fill="none" stroke="#000" stroke-width="1.6" stroke-linejoin="miter"/></svg>
<div class="t" style="left:909.5px;top:1250px;font-size:29px;color:#000;color:#8c8c8c;letter-spacing:0.72px;">Create Glossary Table (Nothing selected in Project Options)</div>
<div style="position:absolute;left:868px;top:1282px;width:902px;height:38px;background:#0b5bd8;"></div>
<div class="t" style="left:909.5px;top:1288px;font-size:29px;color:#000;color:#fff;letter-spacing:0.22px;">Freeze IRI</div>
</body></html>
